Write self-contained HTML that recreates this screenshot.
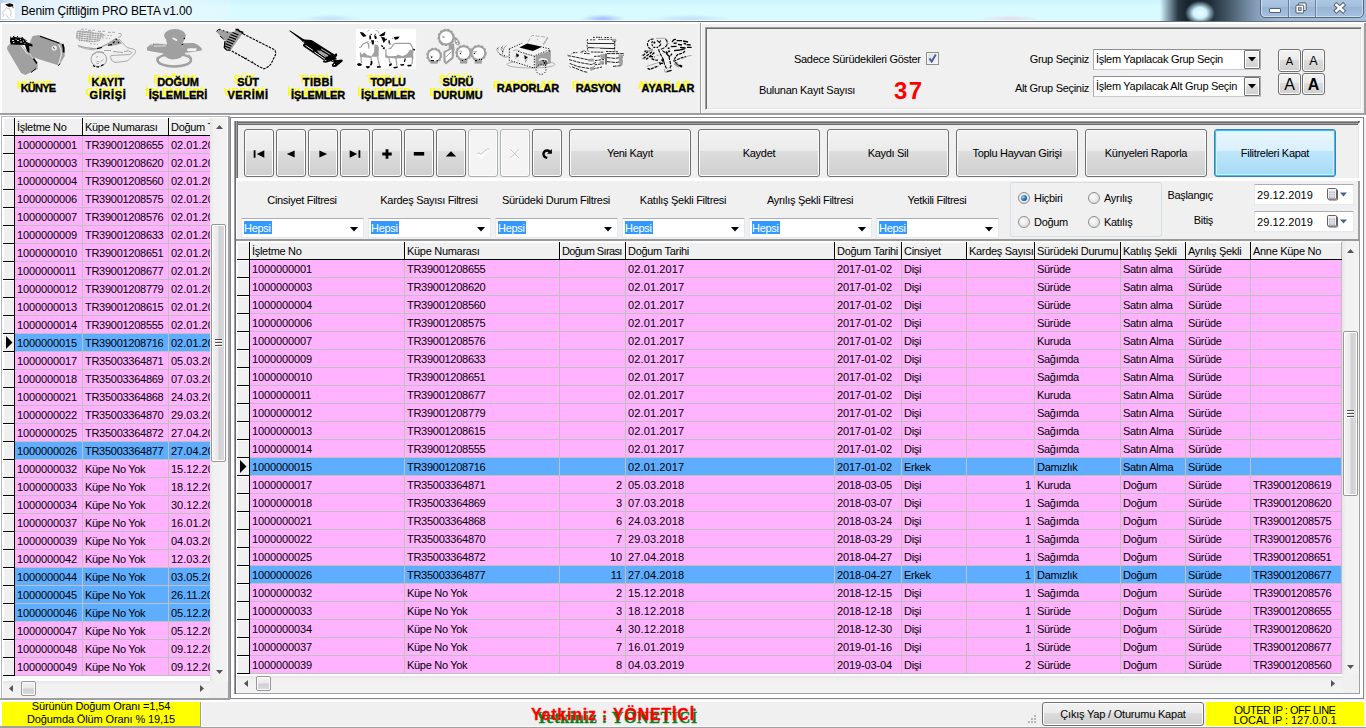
<!DOCTYPE html>
<html lang="tr"><head><meta charset="utf-8"><title>Benim Çiftliğim PRO BETA v1.00</title>
<style>
*{box-sizing:border-box;margin:0;padding:0}
html,body{width:1366px;height:728px;overflow:hidden;background:#f0f0f0}
body{position:relative;font-family:"Liberation Sans",sans-serif;font-size:11px;color:#000;letter-spacing:-0.3px;line-height:13px}
.a{position:absolute}
.n{letter-spacing:-0.12px}
.tr{letter-spacing:-0.27px}
.d{letter-spacing:0.12px}
.btn{position:absolute;border:1px solid #707070;border-radius:3px;background:linear-gradient(#f2f2f2 0%,#ebebeb 45%,#dddddd 46%,#cfcfcf 100%);box-shadow:inset 0 0 0 1px #fcfcfc;text-align:center;white-space:nowrap}
.btn.dis{border-color:#adb2b5;background:#f4f4f4}
.btn.hot{border-color:#3c7fb1;background:linear-gradient(#eaf6fd 0%,#d9f0fc 45%,#bee6fd 46%,#a7d9f5 100%);box-shadow:inset 0 0 0 1px #34c3f3, inset 0 0 0 2px #d7f0fb}
.lbl{position:absolute;white-space:nowrap}
.tl{position:absolute;text-align:center;font-weight:bold;white-space:nowrap;line-height:12.5px;text-shadow:-3.4px -3px 0 #ffff00;-webkit-text-stroke:0.35px #000}
.hdr{position:absolute;white-space:nowrap;overflow:hidden;height:17px;line-height:19px;background:#f0f0f0;box-shadow:inset 1px 1px 0 #fff}
.cell{position:absolute;white-space:nowrap;overflow:hidden;height:17px;line-height:19px}
.combo{position:absolute;background:#fff;border:1px solid #e3e9ef;border-top-color:#abadb3;border-radius:1px}
.sb{position:absolute;background:#f0f0f0}
.thumb{position:absolute;border:1px solid #979797;border-radius:2px;box-shadow:inset 0 0 0 1px #fff}
</style></head>
<body>
<div class="a" style="left:0;top:0;width:1366px;height:22px;background:radial-gradient(ellipse 15px 12px at 1200px 13px,#eefdff 0%,#cdf3ff 45%,rgba(120,180,210,0) 100%),linear-gradient(90deg,rgba(0,0,0,0) 0,rgba(0,0,0,0) 1160px,#86a0b0 1168px,#2a3843 1178px,#17232d 1188px,#1f2d38 1210px,#3f5262 1226px,#657b90 1242px,#86a0ba 1257px,#9ab5d1 1275px,#a3bedb 1366px),radial-gradient(ellipse 22px 5px at 603px 19px,rgba(150,170,255,.8) 0,rgba(150,170,255,0) 100%),radial-gradient(ellipse 40px 5px at 690px 19px,rgba(170,190,255,.45) 0,rgba(170,190,255,0) 100%),radial-gradient(ellipse 30px 5px at 330px 19px,rgba(170,190,255,.45) 0,rgba(170,190,255,0) 100%),radial-gradient(ellipse 30px 4px at 1010px 19px,rgba(255,170,200,.4) 0,rgba(255,170,200,0) 100%),linear-gradient(180deg,#cdf3fc 0%,#d8fbff 35%,#d9fbff 75%,#d2f8ff 100%)"></div>
<div class="a" style="left:0;top:0;width:230px;height:21px;background:linear-gradient(90deg,#b9cfea 0,#cfe2f5 8px,#e6f3fc 24px,#eaf7fe 150px,rgba(225,248,255,0) 260px)"></div>
<div class="a" style="left:0;top:20px;width:1160px;height:1px;background:rgba(255,255,255,.75)"></div><div class="a" style="left:0;top:21px;width:1366px;height:1px;background:#66707a"></div>
<svg class="a" style="left:1px;top:3px" width="14" height="16" viewBox="0 0 14 16"><rect width="14" height="16" fill="#fefefe"/><path d="M4 1.6 L8.6 0.3 L12.4 1.4 L12 3.2 L8 3.9 L6 3Z" fill="#0a0a0a"/><path d="M11.6 3 L12.2 5.2" stroke="#444" stroke-width=".9"/><path d="M6 4 Q4.4 5 4.6 6.6 Q2 7.6 1.6 9.6 Q1.6 11.4 2.6 12 L2 14 M4.6 11.2 Q6.4 12.4 7 14.6 L8.4 15 M8.6 6 Q10.4 8 10 11 L9.4 12.6 L10.6 13.6 M5.4 4.6 Q7 6.4 8.8 5.2" fill="none" stroke="#c4c4c4" stroke-width=".9"/></svg>
<div class="lbl" style="left:21px;top:4px;font-size:12px;line-height:15px;letter-spacing:-0.14px">Benim Çiftliğim PRO BETA v1.00</div>
<div class="a" style="left:1260px;top:-3px;width:104px;height:21px;border:1px solid #56677c;border-radius:0 0 5px 5px;background:linear-gradient(#b1cae4 0%,#a3bfdd 45%,#98b5d5 50%,#a6c1de 100%);box-shadow:inset 0 0 0 1px rgba(255,255,255,.45)"></div>
<div class="a" style="left:1288px;top:0;width:1px;height:17px;background:#6b7f97;box-shadow:1px 0 0 rgba(255,255,255,.4)"></div>
<div class="a" style="left:1315px;top:0;width:1px;height:17px;background:#6b7f97;box-shadow:1px 0 0 rgba(255,255,255,.4)"></div>
<div class="a" style="left:1269px;top:8px;width:12px;height:5px;background:#fbfbfb;border:1px solid #55606e;border-radius:1px"></div>
<svg class="a" style="left:1294px;top:1px" width="14" height="13" viewBox="0 0 14 13"><rect x="4.6" y="1.9" width="7.6" height="7.6" rx="1" fill="#f4f4f4" stroke="#505b69" stroke-width="1"/><rect x="1.9" y="4.2" width="7.8" height="7.8" rx="1" fill="#f8f8f8" stroke="#505b69" stroke-width="1"/><rect x="4.4" y="6.7" width="2.8" height="2.8" fill="#a3bfdd" stroke="#505b69" stroke-width=".8"/></svg>
<svg class="a" style="left:1333px;top:2px" width="14" height="12" viewBox="0 0 14 12"><path d="M3.4 3 L10 8.8 M10 3 L3.4 8.8" stroke="#525d6b" stroke-width="4.4" stroke-linecap="square"/><path d="M3.4 3 L10 8.8 M10 3 L3.4 8.8" stroke="#f8f8f8" stroke-width="2.6" stroke-linecap="square"/></svg>
<div class="a" style="left:0;top:22px;width:1366px;height:2px;background:#fff"></div>
<div class="a" style="left:0;top:22px;width:2px;height:706px;background:#fff"></div>
<div class="a" style="left:700px;top:23px;width:1px;height:90px;background:#a0a0a0"></div>
<div class="a" style="left:701px;top:23px;width:1px;height:90px;background:#fff"></div>
<div class="a" style="left:0;top:113px;width:1366px;height:2px;background:linear-gradient(#999,#a4a4a4)"></div>
<div class="a" style="left:0;top:115px;width:1366px;height:1px;background:#fff"></div>
<div class="a" style="left:229px;top:116px;width:1137px;height:1px;background:#fff"></div>
<div class="a" style="left:1364px;top:23px;width:2px;height:91px;background:#a0a0a0"></div>
<div class="a" style="left:705px;top:27px;width:657px;height:83px;border:1px solid;border-color:#a0a0a0 #fff #fff #a0a0a0;box-shadow:inset 1px 1px 0 #696969,inset -1px -1px 0 #e3e3e3"></div>
<div class="tl" style="left:-2px;top:82px;width:80px"><span style="letter-spacing:-0.78px">KÜNYE</span></div>
<div class="tl" style="left:68px;top:76px;width:80px"><span style="letter-spacing:0.16px">KAYIT</span><br><span style="letter-spacing:0.68px">GİRİŞİ</span></div>
<div class="tl" style="left:138px;top:76px;width:80px"><span style="letter-spacing:-0.13px">DOĞUM</span><br><span style="letter-spacing:-0.04px">İŞLEMLERİ</span></div>
<div class="tl" style="left:208px;top:76px;width:80px"><span style="letter-spacing:-0.13px">SÜT</span><br><span style="letter-spacing:0.51px">VERİMİ</span></div>
<div class="tl" style="left:278px;top:76px;width:80px"><span style="letter-spacing:0.31px">TIBBİ</span><br><span style="letter-spacing:-0.23px">İŞLEMLER</span></div>
<div class="tl" style="left:348px;top:76px;width:80px"><span style="letter-spacing:-0.38px">TOPLU</span><br><span style="letter-spacing:-0.23px">İŞLEMLER</span></div>
<div class="tl" style="left:418px;top:76px;width:80px"><span style="letter-spacing:-0.07px">SÜRÜ</span><br><span style="letter-spacing:0.1px">DURUMU</span></div>
<div class="tl" style="left:488px;top:82px;width:80px"><span style="letter-spacing:0.03px">RAPORLAR</span></div>
<div class="tl" style="left:558px;top:82px;width:80px"><span style="letter-spacing:-0.43px">RASYON</span></div>
<div class="tl" style="left:628px;top:82px;width:80px"><span style="letter-spacing:0.19px">AYARLAR</span></div>
<svg class="a" style="left:4px;top:26px" width="70" height="52" viewBox="0 0 70 52">
<path d="M3.2 20.7 L6.8 17.1 L17.9 19 L33.6 38 L33.6 43 L21.4 49 L17.1 47.1 L3.2 23.6Z" fill="#a0a0a0"/>
<path d="M28.6 10 L35 8.9 L59.3 17.9 L60.7 21.4 L60.7 30 L55 39.6 L34.3 32.9 L28.6 31.4 L24.3 25 L24.3 20Z" fill="#a0a0a0"/>
<path d="M6.2 12 L10 11 L15 11.5 L20 12.5 L22.5 16 L28.5 18.5 L28.5 20.5 L25 20 L25.5 27.5 L23 25 L21 19 L7 18.5 L6 16Z" fill="#000"/>
<path d="M8 14.5h2M11.5 13.2h1M13 14.6h2M16 13.4h1M16 16h2M19 15h1M9 16.6h1.4M20.4 17.4h1" stroke="#f2f2f2" stroke-width=".9"/><path d="M6 11.6l1-.8M9 10.6l1.4-.4M13 10.8l1-.4M17.6 11.4l1.4.4M21.4 13.6l1 1.2M24.4 21.6l.6 2.4" stroke="#000" stroke-width="1"/>
<path d="M17 19.5 L24 28.5" stroke="#f4f4f4" stroke-width="1"/>
<path d="M36 10.2 L55.5 17.2" stroke="#000" stroke-width="1.2"/>
<path d="M58.6 18 L59.6 22 L59.6 26.6" stroke="#000" stroke-width="1.8" fill="none"/>
<path d="M54.5 18 Q58 23 57.3 29 L54.5 38.5" stroke="#f6f6f6" stroke-width="1" fill="none"/>
<path d="M54.2 39.6 L56.3 37.6" stroke="#000" stroke-width="1"/>
<circle cx="50.3" cy="22" r="2.6" fill="#ececec"/><path d="M49.5 20.8 Q49 22.6 51 23" stroke="#333" stroke-width=".8" fill="none"/>
<path d="M29.5 32.5 L33 37.5" stroke="#000" stroke-width="1.6"/>
<path d="M27 46.5 L32 42.5" stroke="#000" stroke-width="1"/>
<path d="M31 31.5 L33.5 34" stroke="#f6f6f6" stroke-width="1"/>
</svg>
<svg class="a" style="left:72px;top:26px" width="70" height="52" viewBox="0 0 70 52">
<defs><pattern id="kb" width="2.6" height="2.1" patternUnits="userSpaceOnUse" patternTransform="rotate(6)"><rect width="2.1" height="1.5" fill="#a0a0a0"/></pattern></defs>
<path d="M5 5.6 L7 5 L29 6.6 L31 7.6 L33 9.4 L29.5 11.5 L27.5 15.6 L20 16.6 L8 15.4 L4.6 12.6Z" fill="url(#kb)"/>
<path d="M5 5.6 L7 5 L20 6 M4.6 12.6 L5 5.6" stroke="#a0a0a0" stroke-width=".8" fill="none"/>
<path d="M9 3.2h6M16 4.3h7M26 5.3h7M36 6.3h7" stroke="#a0a0a0" stroke-width=".9" stroke-dasharray="3 1.2"/>
<path d="M28 9 L40 9.5 M30 12 L38 12.5 M18 17.5 L26 18.5" stroke="#a0a0a0" stroke-width=".8" stroke-dasharray="2 1.5"/>
<path d="M6 19.5 Q14 22.5 24 23 Q34 20 44 12.5" stroke="#a0a0a0" stroke-width="1.3" fill="none"/>
<path d="M6.5 20.5 Q14 23.5 22 24" stroke="#a0a0a0" stroke-width=".8" fill="none"/>
<path d="M35 19.5 L45.5 12.5 L50 17.5 L42 19.5Z" fill="#a0a0a0"/>
<path d="M25 22.6 L30 21.5 M36 19.2 L40 18.6 M41 17 L42.5 15.5 M43.5 13.5 L45 13 M46 16 L47 17" stroke="#000" stroke-width="1.1"/>
<path d="M46.5 7.5 Q49.5 6.5 49.5 9 Q49 11 46 11.5" stroke="#a0a0a0" stroke-width=".9" fill="none"/>
<path d="M47 13 L55 21.5 L62.5 23.5 Q64.5 25 63 27.5 L55.5 35 L43 36.5 Q38 34.5 38.5 31 L39 29.5 L58 28.5 L60 26.5 L55.5 24.5" stroke="#a0a0a0" stroke-width=".9" fill="none"/>
<path d="M32 24.5 L39 24.5 M41 25.5 L51 26.5 M52 25.5 L56 25" stroke="#a0a0a0" stroke-width=".9"/>
<ellipse cx="26.8" cy="33.2" rx="7.8" ry="7.4" fill="none" stroke="#a0a0a0" stroke-width="1"/>
<path d="M20 29 L26 25.8 L32 26.5" stroke="#a0a0a0" stroke-width=".9" fill="none"/>
<path d="M24 31.5l2-1.3M24.5 35.5h3M28.5 35.8l3-2.3M24.5 37.5h2.5" stroke="#a0a0a0" stroke-width=".8"/>
<path d="M21 39.5 L23 40.6 M24.5 40.8 L27 40.8 M29 39.8 L31.5 38.5" stroke="#000" stroke-width="1.2"/>
</svg>
<svg class="a" style="left:142px;top:26px" width="70" height="52" viewBox="0 0 70 52">
<ellipse cx="32.9" cy="9.6" rx="10.9" ry="6.6" fill="#a0a0a0"/>
<path d="M23.5 11 Q25 17 25 19 L25 27 L40.5 27 L40.5 18.5 Q42 14 43 11Z" fill="#a0a0a0"/>
<path d="M5 21.5 Q8 18.2 12 17.3 L25 18.5 L25 24 L22 27.5 L10 25.5 L5 24.5Z" fill="#a0a0a0"/>
<path d="M40.5 17.2 L52 17 Q57 18.5 59.8 22.5 L59.5 24.5 L45 26.8 L40.5 26Z" fill="#a0a0a0"/>
<path d="M20 25 Q22 32.5 30 33.5 Q40 33.5 44 26 L44 22 L21 22Z" fill="#a0a0a0"/>
<ellipse cx="32.3" cy="34.2" rx="16.7" ry="6.3" fill="none" stroke="#a0a0a0" stroke-width="2.4"/>
<path d="M16 31 Q14.5 34.5 17.5 37" stroke="#a0a0a0" stroke-width="2.2" fill="none"/>
<path d="M42.5 40 Q48.5 37 49.5 33 Q49.5 30 46 28.5" stroke="#a0a0a0" stroke-width="1" fill="none"/>
<path d="M45 24.3 Q44.8 22.4 47 22.3 L53.5 22.2 Q55.5 22.3 54.5 23.8 L53.5 25 L46 25.2Z" fill="#f4f4f4"/>
<path d="M9.5 19.5 L11.5 17.8 L13.5 17.6 M19.5 17.5 L23.5 17.6" stroke="#ececec" stroke-width="1"/>
<path d="M12 20.2 L24 19.8" stroke="#e4e4e4" stroke-width="1"/>
<path d="M31.2 12.3 L34.5 14.2" stroke="#f6f6f6" stroke-width="1.7" stroke-linecap="round"/>
<circle cx="42.4" cy="12.5" r=".8" fill="#000"/><circle cx="40.4" cy="18.5" r=".8" fill="#000"/>
</svg>
<svg class="a" style="left:210px;top:26px" width="70" height="52" viewBox="0 0 70 52">
<path d="M6.2 5.5 L9.5 3.2 L20.5 6 L25 5.5 L17 15.5 L13.5 13.5Z" fill="#a0a0a0"/>
<path d="M6.5 5.2 L8.5 3.5 L10.5 3.3 M13 4.5 l1.2 .5 M16.5 6 l1.5 .4 M10 10 L13.5 13.2" stroke="#000" stroke-width="1" fill="none"/>
<path d="M26.5 3.5 L32.5 7.5 L20.5 24.5 L14.5 22 L14.5 18Z" fill="#a0a0a0"/>
<path d="M22.5 6.5 L28.5 9 M20.5 8.5 L27.5 11.2 M19 10.8 L26 13.4 M17.5 13 L24.6 15.7 M16.5 15.3 L23.2 18 M15.5 17.6 L21.6 20.2 M14.8 20 L20.6 22.4" stroke="#000" stroke-width="1.2"/>
<path d="M25.5 3.6 L28 3.6 L29.5 5.2 L32.5 6.3 L32.2 7.8" stroke="#000" stroke-width="1.6" fill="none"/>
<path d="M15 15 L14.3 21.5 L16.5 24 L20.5 24.4" stroke="#000" stroke-width="1.3" fill="none"/>
<path d="M33 7.8 L64 23.5 Q66 25 65.6 28.5 L61 38 Q58 41.5 54 42.8 L50 41 L21 24.5" stroke="#000" stroke-width="1.1" fill="none" stroke-dasharray="2.6 1"/>
<path d="M33 31 l2.2 1.7 l1.8 -.6 M42 35.5 l1.5 1.2" stroke="#000" stroke-width=".9" fill="none"/>
</svg>
<svg class="a" style="left:280px;top:26px" width="70" height="52" viewBox="0 0 70 52">
<path d="M9 4.8 L10.2 4.6 L24 13.4 L23 15.4Z" fill="#000"/>
<path d="M21 12.8 L25 13.4 L31.5 14 L34 15.4 L54.5 28.4 L46 35.8 L23.5 20.5 L22.8 19 L24.4 17.2 L21.8 15Z" fill="#000"/>
<path d="M45 35 L56.5 27 L57.3 29.8 L55.5 31.5 L57 33 L46 36.8 L43 36.2 L43.2 34.4Z" fill="#000"/>
<path d="M52.5 33.2 L57.5 34 L62 33.5 L63 35 L56 40.8 L52.5 41 L51.8 38.5 L54 36.4 L50.4 35Z" fill="#000"/>
<path d="M25.5 19.4 L33 24.4 M34.5 26 L45 33.2" stroke="#f0f0f0" stroke-width="1"/>
<path d="M37.5 24.6 L47 30.2 M39.5 25 L48 30" stroke="#a8a8a8" stroke-width="1.5"/>
<path d="M38.5 26.4 L46 31.2" stroke="#d8d8d8" stroke-width="1"/>
<path d="M41 22.8 L50.5 28.6" stroke="#f0f0f0" stroke-width=".8"/>
<path d="M44.8 34.8 l1.6 -.6 M52.2 34.6 l1.2 .3 M53.6 38.8 l1.4 -.5" stroke="#ddd" stroke-width="1"/>
<circle cx="23.8" cy="16" r=".8" fill="#999"/>
</svg>
<svg class="a" style="left:350px;top:26px" width="70" height="52" viewBox="0 0 70 52">
<rect x="5.9" y="3" width="60.2" height="40" fill="#fff"/>
<g fill="#000">
<path d="M9.8 6 L13 6.5 L16.5 10 L13.5 11 L11.5 9Z"/><path d="M29 9.5 L35.5 5.5 L34.5 9.5 L31 10.5Z"/>
<path d="M19.3 9.5l1.6 0 .3 3.8-1.8.3z"/><path d="M24 9.3l2 .4 1 2.6-2 .9z"/><path d="M19.6 8l2-.2.4 1.2M24 8l1.7-.3.5 1.2"/>
<path d="M21 14.2 L24 14.2 L23.8 18.6 L22.2 18.6Z"/>
<path d="M31 11 L34.5 11.2 L35.6 14.4 L33.6 17 L32.5 14Z"/><path d="M35 13 l1.6 -.4 .3 1.4 -1.6 .3z"/>
<path d="M38.4 14.2 l1.4 .2 .2 3.4 -1.4 -.4z"/>
<path d="M31.4 19 l2 1 -.6 1.2 -1.8-1z M33.4 21.2 l1.8 .4 -1 1.8 -1.6 -1z"/>
<path d="M43.6 11 L49.6 10.4 L48 13 L45 13.8Z"/>
<circle cx="27.5" cy="21.4" r=".8"/>
<path d="M62 22.6 l2.8 .4 .2 1.6 -2.8 -.4z"/>
<path d="M7 38 L9 37 L11.8 38 L11.4 39.8 L8 40Z"/><path d="M15.6 40.2 L19.8 40 L19.4 42 L17 42.6Z"/><path d="M20.6 35 l1.6 0 .4 2 -1.2 2.6 -1.6 -.4 .8 -2z"/><path d="M26.8 40.2 L30.8 40 L30.6 41.8 L27 41.8Z"/>
<path d="M39 38.4 l1.4 -1.4 1.6 .4 -.4 1.8 -2.2 1.2z"/><path d="M43.2 41 L47.8 40.4 L47.6 42 L44 42.6Z"/><path d="M50 38.2 L54.2 38 L54 39.6 L51 39.8Z"/><path d="M57 39 L61.6 38.6 L61.4 40.2 L58 40.6Z"/>
<path d="M54.6 32.4 l1.2 .2 -.8 3.4 -1.2 -.2z"/>
</g>
<g fill="none" stroke="#a0a0a0" stroke-width="1.25">
<path d="M9.2 21.4 L11 21 L13 18 L17 16.2 L18.6 18.5"/>
<path d="M10.4 26.5 L10.6 31 M11 31 L11.4 37"/>
<path d="M21 31.5 L21.4 35"/>
<path d="M27.6 31 L28.6 36 L29.6 40"/>
<path d="M18.4 17 L19 22.6"/>
<path d="M36 23.5 L35.8 31 L39 31.4 L39.4 35 L41 37.6"/>
<path d="M38.4 22.4 L41 22.2 L43.4 18.2 L46 17.4 L60 17.4 L62.6 21.6 L62.8 27"/>
<path d="M43 13 L42.4 11.8 M41 17.6 L39 18.6"/>
<path d="M46 32 L46.8 39.8"/>
<path d="M62.6 31 L62 38"/>
<path d="M17.5 5.5l1.8-1.6M25.5 4.2l2.6 1.2.8 2.2" stroke-width=".8"/>
</g>
<g fill="#a0a0a0">
<path d="M24.4 18.5 L27.6 19 L28.8 22 L28.6 30.8 L21 30.8 L24.2 26Z"/>
<path d="M10.2 26.4 L12 28.4 L14.4 26.6 L17.4 29.2 L21.5 30 L21.5 32 L10.4 31Z"/>
<path d="M36.2 28.5 L38.6 30.2 L46 30 L48 28.4 L52.6 30.2 L57 28 L59.4 24.4 L60 23.6 L63 25 L63.4 33 L61 31.6 L46.6 32.4 L36.2 31.6Z"/>
</g>
<g fill="#a0a0a0"><rect x="17.5" y="15" width="1" height="1"/><rect x="19.5" y="16.2" width="1" height="1"/><rect x="25.3" y="15" width=".8" height=".8"/><rect x="27" y="15.2" width=".8" height=".8"/></g>
</svg>
<svg class="a" style="left:420px;top:26px" width="70" height="52" viewBox="0 0 70 52">
<path d="M34 10 L37.5 12.5 L40.5 17.5 L38 19.5 L35.5 18 L34.5 15Z" fill="#a0a0a0"/>
<circle cx="36.6" cy="15" r=".9" fill="#f4f4f4"/><circle cx="37.6" cy="17.4" r=".8" fill="#f4f4f4"/>
<path d="M29 17.5 L34 17.5 L34.5 24 L33.5 32.5 L26 38.5 L23.6 36 L23.4 25.5 L28.6 23Z" fill="#a0a0a0"/>
<path d="M25.4 26.5 L31.6 23.4 L31.8 31 L25.8 36Z" fill="#fff"/>
<path d="M26 31 L31.5 25.6" stroke="#a0a0a0" stroke-width="1"/>
<circle cx="26.2" cy="11.4" r="7.2" fill="#fff" stroke="#a0a0a0" stroke-width="2"/><circle cx="26.2" cy="11.4" r="7.9" fill="none" stroke="#a0a0a0" stroke-width="1.6" stroke-dasharray="2.2 1.6"/>
<path d="M22.4 9.6 L25.2 11 L22.6 12.6Z" fill="#a0a0a0"/>
<path d="M20 16 l1.4 2 2 1" stroke="#a0a0a0" stroke-width="1.4" fill="none"/>
<circle cx="14.2" cy="29.6" r="6.5" fill="#fff" stroke="#a0a0a0" stroke-width="1.9"/><circle cx="14.2" cy="29.6" r="7.2" fill="none" stroke="#a0a0a0" stroke-width="1.6" stroke-dasharray="2.2 1.6"/>
<rect x="10.4" y="35.2" width="7.4" height="2.4" fill="#a0a0a0"/>
<path d="M10.6 29.6 l1 1.6 1.4-1.6" stroke="#a0a0a0" stroke-width=".8" fill="none"/><circle cx="11.6" cy="31.2" r=".7" fill="#000"/>
<path d="M10.8 34.6h3.2M16.6 34.6h1.4" stroke="#000" stroke-width="1"/>
<circle cx="43.6" cy="27" r="6.8" fill="#fff" stroke="#a0a0a0" stroke-width="1.9"/><circle cx="43.6" cy="27" r="7.5" fill="none" stroke="#a0a0a0" stroke-width="1.6" stroke-dasharray="2.2 1.6"/>
<rect x="40" y="33.4" width="7.2" height="4.2" fill="#a0a0a0"/>
<path d="M38.6 25.2h3.4l-1.4 2" stroke="#a0a0a0" stroke-width=".8" fill="none"/><circle cx="40.4" cy="27.6" r=".7" fill="#000"/>
<circle cx="42.4" cy="34.4" r=".7" fill="#000"/><circle cx="45.6" cy="33.4" r=".7" fill="#000"/>
<circle cx="58.4" cy="27" r="6.8" fill="#fff" stroke="#a0a0a0" stroke-width="1.9"/><circle cx="58.4" cy="27" r="7.5" fill="none" stroke="#a0a0a0" stroke-width="1.6" stroke-dasharray="2.2 1.6"/>
<rect x="54.6" y="33.4" width="7.2" height="4.2" fill="#a0a0a0"/>
<path d="M53 25.4h3.6l-1.6 2" stroke="#a0a0a0" stroke-width=".8" fill="none"/><circle cx="54.4" cy="27.4" r=".7" fill="#000"/>
<path d="M55 34.6h2M59 33.4h1M61 33.4h1" stroke="#000" stroke-width="1"/>
</svg>
<svg class="a" style="left:490px;top:26px" width="70" height="52" viewBox="0 0 70 52">
<ellipse cx="41" cy="38.4" rx="24" ry="3.6" fill="none" stroke="#a0a0a0" stroke-width=".8"/>
<path d="M19.3 22.9 L32.2 17.2 L59.3 22.9 L59.8 24 L44.3 30 Z" fill="#f4f4f4"/>
<path d="M19.3 22.9 L44.3 30 L44.3 42.2 L19.3 34.3Z" fill="#f0f0f0"/>
<path d="M45.6 30 L60.8 24.2 L60.8 37.2 L45.6 41.4Z" fill="#a0a0a0"/>
<path d="M29.3 21.4 L37.2 17.5 L52.2 20.7 L42.9 25Z" fill="#000"/>
<path d="M19.3 22.9 L32.2 17.2 M52.8 21.2 L59.3 22.9 L59.6 26 M19.3 22.9 L19.3 34.3 L44.3 42.2 L44.3 30 L59.3 23.6 M28 25.4 L44.3 30" stroke="#000" stroke-width=".95" fill="none" stroke-dasharray="1.2 1.5"/>
<path d="M38 15.8 L42 9.4 L57.8 11.4 L53 19.4" stroke="#a0a0a0" stroke-width=".8" fill="none" stroke-dasharray="4 1.6"/>
<path d="M53.5 18 L57.8 12" stroke="#a0a0a0" stroke-width="1.6" stroke-dasharray="1 1"/>
<circle cx="47.4" cy="13.4" r=".5" fill="#a0a0a0"/>
<path d="M23 24.5 Q28 23 30 25 M26 28.6 l3 0 M33.5 27 l8 2.6" stroke="#a0a0a0" stroke-width=".8" fill="none"/>
<path d="M26.4 27.5 L29 29.6 L26.8 31.2Z M34.6 29.4 L37.6 31.4 L35 33.2Z M35 35.5 l2 -1.6" fill="#000" stroke="#000" stroke-width=".5"/>
<path d="M25 29.5 l.8 3.6 M28 33.5 l1.2 2.5 M37 32 l-1.6 5" stroke="#a0a0a0" stroke-width=".8" stroke-dasharray="1.4 1"/>
<path d="M16.5 19.4 L14 22 L12 29 L15 31.4 L19 30 M9 20.6 L6.4 23.6 L9 27.4 L13.6 31 M13 19.6 l-2 3.4 2 3" stroke="#a0a0a0" stroke-width="1" fill="none"/>
<path d="M7.5 22.6 l.8 .6 M11.6 21.6 l.8 .6 M12 25 l.8 .6 M9.6 28 l1 .8 M14 29.4 l1 .6" stroke="#000" stroke-width="1"/>
<path d="M49 34.6 Q50.6 32 54 33.2 Q57.4 33 57.4 36 Q57 38 55.4 38.2" stroke="#eee" stroke-width="1.6" fill="none"/>
<circle cx="51" cy="43.4" r="5" fill="none" stroke="#000" stroke-width=".9" stroke-dasharray="1.2 1.6"/>
<path d="M52.5 34.6 L56.6 35.2 L57 38 L55 39.4" stroke="#000" stroke-width="1.2" fill="none" stroke-dasharray="1.6 1"/>
<circle cx="54.6" cy="37" r="1" fill="#000"/>
<path d="M57.4 24 l1.6 -.6 M55.6 25.4 l1.2 -.5" stroke="#ddd" stroke-width="1"/>
</svg>
<svg class="a" style="left:560px;top:26px" width="70" height="52" viewBox="0 0 70 52">
<path d="M27.4 13.5 Q27.4 12 30 11.8 L53 11.6 Q56 12 56.4 14.4 L54.8 16.4 L54.8 24.6 L28.4 24.8 Q26.8 22 27.2 19Z" fill="#f6f6f6"/>
<path d="M33 11.4h2M36 11.3h6M44.6 11.5h4M50.5 11.6h1.2" stroke="#000" stroke-width=".9" stroke-dasharray="1.6 .8"/>
<path d="M30 13.8h6M38.4 13.4h11.4M50.5 13.4h2" stroke="#333" stroke-width=".9" stroke-dasharray="2.2 .7"/>
<path d="M27.6 13.2 Q26.8 15 27.6 17.2 Q26.6 19.6 27.6 22 Q27 24 28.8 25.6" stroke="#000" stroke-width=".85" fill="none" stroke-dasharray="2 .8"/>
<path d="M28 17.4 L54.4 17.6 M28 21.6 L34.6 21.8 M40 22.2 L54.6 22.6" stroke="#000" stroke-width=".85"/>
<path d="M35 21.8h5" stroke="#a0a0a0" stroke-width="1.4"/>
<path d="M52 13.4 L55.6 12.6 L56.6 14.6 L54.6 16.6 L52.4 16Z" fill="#a0a0a0"/>
<path d="M54.8 15 L54.6 24.4" stroke="#000" stroke-width=".85" stroke-dasharray="2.4 .6"/>
<path d="M7.2 28.4 L21 25.4 L45.4 27.4 L45.6 40.4 L32 46.4 L25 46.6 L9.4 40.4Z" fill="#f6f6f6"/>
<path d="M45.6 26.6 L63.4 26.8 L63.6 39.6 L54 40.8 L45.6 38.6Z" fill="#f6f6f6"/>
<path d="M13 26.6h4.4M21.4 25.6 L24.6 24.8 L27 26.8 M24 27.4 L30 27.8 M31 26 L44 26.2 M46 25.4 L58 25.8" stroke="#000" stroke-width=".85" stroke-dasharray="2.4 .8" fill="none"/>
<path d="M8 29.6 L17 31.4 L32 34.6 L33 33.2 M9 33.6 L20 36.6 L31.6 38.6 L36 36.4 M9.6 37.4 L18 40.6 L30 42.6 L34.6 40.4 M12 40.8 L24 45.6 L28 46.4" stroke="#000" stroke-width=".85" fill="none" stroke-dasharray="3.4 .8"/>
<path d="M34 30.4 L42 30 M35 34.6 L44 33.4 M34.6 38.8 L44 37.6 M33 43 L42 41" stroke="#000" stroke-width=".85" stroke-dasharray="2.6 .9"/>
<path d="M46 27.4 L46 38.4" stroke="#000" stroke-width="1.1"/>
<path d="M47 27.6 L63.4 27.6 L63.4 29.6 M47 31.6 L55 32.4 L63 31 M47 35.6 L56 36.6 L63 35.2 M53 40.4 L62 39.6" stroke="#000" stroke-width=".85" fill="none" stroke-dasharray="3.6 .8"/>
<path d="M7.2 28.2 L7.4 30 L9 31.4 L8.4 28.6Z M27.4 33 L33.4 32.6 L34 35.6 L28.6 35.6Z M40 28.6 L45 28 L45.4 32.6 L41 33.6Z M39.6 35.4 L44 34.6 L44 37.6 L40 38Z M30 41.4 L34 40.8 L34 43.8 L30.4 45Z M58.6 28.6 L62.6 28.4 L62.8 39 L59.4 39.4 L58.8 34Z" fill="#a0a0a0"/>
<path d="M20 26.2 L22.6 26.8" stroke="#a0a0a0" stroke-width="1.6"/>
<path d="M8.8 39.6 L11 42 M11 28.2 l2.6 -.8" stroke="#a0a0a0" stroke-width=".9"/>
</svg>
<svg class="a" style="left:630px;top:26px" width="70" height="52" viewBox="0 0 70 52">
<g fill="none" stroke="#000" stroke-width="1.1">
<path d="M23.6 13 Q18.6 12.6 17.4 17.6 Q17.6 22.6 22.4 23.4" stroke-dasharray="3 1"/>
<path d="M22.4 15 Q21 19.6 24 21.4 L28 21.4" stroke-dasharray="2 1.2"/>
<path d="M35.6 13 Q38.4 16 36.6 19.6 Q33.6 23 29.6 23.6" stroke-dasharray="4 1"/>
<path d="M27 14.4 L29.6 16.6 L30.6 14.6 M31 17.6 Q30.6 19.6 28.6 20.4" />
<path d="M28.4 23.4 L30 27.4 L33.4 33.4 L34.4 38 L36 41.6 L38 43 M32.4 24.6 L36 27 L39 31 L40 35.4 L41 40 L39.4 43" stroke-dasharray="3.4 1"/>
<path d="M14.4 25.6 L16.4 24.6 M12.6 29.6 L19.6 24.6 M13.4 32.6 L22 25.6 M16 33.6 L24.4 26.6 M20 30.6 L24.6 30.8 M21.6 32.6 L24.6 34 L28 34" stroke-width="1.3" stroke-dasharray="3 1"/>
<path d="M17.6 42.4 L19.6 43.4 L28.4 40 M29.6 36 L30.6 39.4 M30 37.4 L33.6 37.4" stroke-width="1.3" stroke-dasharray="3 .8"/>
<path d="M42 16 L44 13.6 L46 13.4 M46.6 14.6 L52 14.6 M53 15 L58 16 M43.6 17.4 L46.6 17 M48 18.4 L52 19 M53.6 17.4 L56 18 M56.6 18.6 L60.6 19 M57 21.4 L61.6 21.4 M41 20.6 L46.6 20.4 M50 21.4 L55.6 22 M44 24.6 L50 24 L55 22.6" stroke-width="1.3"/>
<path d="M55 25 L53 27 L47.6 28.6 L45.6 31 L43.6 34.6 M40.6 29.6 L42 27.6 M38 29 L40 31" stroke-width="1.2" stroke-dasharray="3 .8"/>
<path d="M43.6 35.6 L47.6 33.6 L52 31.6 L56 30.6" stroke-dasharray="3 .9"/>
<path d="M44.6 38 L48 39 L51.6 40.4 M45 36.6 L47.4 37.4" stroke-width="1.3"/>
<path d="M38.6 21.4 L38.6 23 M38.6 24.6 L39.6 26" stroke-width="1.8"/>
<path d="M36 25.6 L37.6 27.6 M31.6 33.4 L33.6 35.6" stroke-width="1.8"/>
<path d="M36.6 45.6 L41.6 44.4" />
</g>
<g fill="none" stroke="#a0a0a0" stroke-width=".9">
<path d="M26 12.4 L35 12.2 L37.4 14"/><path d="M38 17.6 L39.4 17"/>
<path d="M11.4 29.4 L14 28 M11.4 32 L14.6 33.6 M15.6 24.4 L23.6 24.6"/>
<path d="M16.6 40.4 L29 36.4"/><path d="M34.6 43 L34.8 46 L38 46.4"/>
<path d="M52.6 32.6 L58 30 L61.6 29.4"/><path d="M40 20.6 L42 19.6 M50 24.6 L52.6 24.6"/>
<path d="M24.6 33.4 L28 33.6 M26.6 29.4 L28.6 29.2"/>
<path d="M44.6 37.4 L46.6 39.6 L49 41" stroke-width="1.6"/>
<path d="M33.6 27 L32.4 27.4" />
</g>
<path d="M49.8 38.4 L52.4 39.4 L52 41.4 L49.6 41Z" fill="#000"/>
<circle cx="24.4" cy="16.6" r="1.1" fill="#000"/>
</svg>
<div class="lbl" style="left:794px;top:53px">Sadece Sürüdekileri Göster</div>
<div class="a" style="left:926px;top:52px;width:13px;height:13px;border:1px solid #8e8f8f;background:linear-gradient(135deg,#dcdfe3,#f6f6f6);box-shadow:inset 0 0 0 1px #f4f4f4"></div>
<svg class="a" style="left:928px;top:54px" width="9" height="9" viewBox="0 0 9 9"><path d="M1.4 4.4 L3.7 7.6 L7.8 0.5" fill="none" stroke="#4b6097" stroke-width="1.9"/></svg>
<div class="lbl" style="left:759px;top:84px">Bulunan Kayıt Sayısı</div>
<div class="lbl" style="left:894px;top:77px;font-size:24px;line-height:28px;font-weight:bold;color:#ff0000;letter-spacing:1.3px">37</div>
<div class="lbl" style="left:989px;top:53px;width:100px;text-align:right">Grup Seçiniz</div>
<div class="lbl" style="left:989px;top:82px;width:100px;text-align:right">Alt Grup Seçiniz</div>
<div class="a" style="left:1093px;top:49px;width:168px;height:21px;background:#fff;border:1px solid #abadb3;border-top-color:#8e9096;border-bottom-color:#c9cbd1"></div>
<div class="lbl" style="left:1096px;top:53px">İşlem Yapılacak Grup Seçin</div>
<div class="btn" style="left:1244px;top:50px;width:16px;height:19px;border-radius:1px"></div>
<svg class="a" style="left:1248px;top:57px" width="8" height="5" viewBox="0 0 8 5"><path d="M0 0 H8 L4 4.5Z" fill="#000"/></svg>
<div class="a" style="left:1093px;top:76px;width:168px;height:21px;background:#fff;border:1px solid #abadb3;border-top-color:#8e9096;border-bottom-color:#c9cbd1"></div>
<div class="lbl" style="left:1096px;top:80px">İşlem Yapılacak Alt Grup Seçin</div>
<div class="btn" style="left:1244px;top:77px;width:16px;height:19px;border-radius:1px"></div>
<svg class="a" style="left:1248px;top:84px" width="8" height="5" viewBox="0 0 8 5"><path d="M0 0 H8 L4 4.5Z" fill="#000"/></svg>
<div class="btn" style="left:1278px;top:49px;width:23px;height:23px;font-size:11px;line-height:23px;font-weight:normal;letter-spacing:0">A</div>
<div class="btn" style="left:1302px;top:49px;width:23px;height:23px;font-size:12.5px;line-height:23px;font-weight:normal;letter-spacing:0">A</div>
<div class="btn" style="left:1278px;top:73px;width:23px;height:22px;font-size:16px;line-height:22px;font-weight:normal;letter-spacing:0">A</div>
<div class="btn" style="left:1302px;top:73px;width:23px;height:22px;font-size:16px;line-height:22px;font-weight:bold;letter-spacing:0">A</div>
<div class="a" style="left:1px;top:116px;width:229px;height:584px;background:#fff;border:1px solid #a0a0a0;border-right-width:2px;border-top-color:#b4b8c0;border-left-color:#b4b8c0"></div>
<div class="a" style="left:3px;top:118px;width:207px;height:558px;overflow:hidden;background:#fff">
<div class="hdr" style="left:0;top:0;width:11px"></div><div class="a" style="left:11px;top:0;width:1px;height:17px;background:#000"></div>
<div class="hdr" style="left:12px;top:0;width:67px;padding-left:2px">İşletme No</div><div class="a" style="left:79px;top:0;width:1px;height:17px;background:#000"></div>
<div class="hdr" style="left:80px;top:0;width:85px;padding-left:2px">Küpe Numarası</div><div class="a" style="left:165px;top:0;width:1px;height:17px;background:#000"></div>
<div class="hdr" style="left:166px;top:0;width:60px;padding-left:2px">Doğum Tarihi</div><div class="a" style="left:226px;top:0;width:1px;height:17px;background:#000"></div>
<div class="a" style="left:0;top:17px;width:207px;height:1px;background:#000"></div>
<div class="a" style="left:0;top:18px;width:11px;height:17px;background:#f0f0f0;box-shadow:inset 1px 1px 0 #fff"></div>
<div class="a" style="left:0;top:35px;width:12px;height:1px;background:#000"></div><div class="a" style="left:11px;top:18px;width:1px;height:18px;background:#000"></div>
<div class="a" style="left:12px;top:18px;width:195px;height:18px;background:#ffb3ff;border-bottom:1px solid #c0c0c0"></div>
<div class="cell n" style="left:14px;top:18px;width:66px">1000000001</div>
<div class="cell tr" style="left:82px;top:18px;width:84px">TR39001208655</div>
<div class="cell" style="left:168px;top:18px;width:60px;letter-spacing:0">02.01.2017</div>
<div class="a" style="left:0;top:36px;width:11px;height:17px;background:#f0f0f0;box-shadow:inset 1px 1px 0 #fff"></div>
<div class="a" style="left:0;top:53px;width:12px;height:1px;background:#000"></div><div class="a" style="left:11px;top:36px;width:1px;height:18px;background:#000"></div>
<div class="a" style="left:12px;top:36px;width:195px;height:18px;background:#ffb3ff;border-bottom:1px solid #c0c0c0"></div>
<div class="cell n" style="left:14px;top:36px;width:66px">1000000003</div>
<div class="cell tr" style="left:82px;top:36px;width:84px">TR39001208620</div>
<div class="cell" style="left:168px;top:36px;width:60px;letter-spacing:0">02.01.2017</div>
<div class="a" style="left:0;top:54px;width:11px;height:17px;background:#f0f0f0;box-shadow:inset 1px 1px 0 #fff"></div>
<div class="a" style="left:0;top:71px;width:12px;height:1px;background:#000"></div><div class="a" style="left:11px;top:54px;width:1px;height:18px;background:#000"></div>
<div class="a" style="left:12px;top:54px;width:195px;height:18px;background:#ffb3ff;border-bottom:1px solid #c0c0c0"></div>
<div class="cell n" style="left:14px;top:54px;width:66px">1000000004</div>
<div class="cell tr" style="left:82px;top:54px;width:84px">TR39001208560</div>
<div class="cell" style="left:168px;top:54px;width:60px;letter-spacing:0">02.01.2017</div>
<div class="a" style="left:0;top:72px;width:11px;height:17px;background:#f0f0f0;box-shadow:inset 1px 1px 0 #fff"></div>
<div class="a" style="left:0;top:89px;width:12px;height:1px;background:#000"></div><div class="a" style="left:11px;top:72px;width:1px;height:18px;background:#000"></div>
<div class="a" style="left:12px;top:72px;width:195px;height:18px;background:#ffb3ff;border-bottom:1px solid #c0c0c0"></div>
<div class="cell n" style="left:14px;top:72px;width:66px">1000000006</div>
<div class="cell tr" style="left:82px;top:72px;width:84px">TR39001208575</div>
<div class="cell" style="left:168px;top:72px;width:60px;letter-spacing:0">02.01.2017</div>
<div class="a" style="left:0;top:90px;width:11px;height:17px;background:#f0f0f0;box-shadow:inset 1px 1px 0 #fff"></div>
<div class="a" style="left:0;top:107px;width:12px;height:1px;background:#000"></div><div class="a" style="left:11px;top:90px;width:1px;height:18px;background:#000"></div>
<div class="a" style="left:12px;top:90px;width:195px;height:18px;background:#ffb3ff;border-bottom:1px solid #c0c0c0"></div>
<div class="cell n" style="left:14px;top:90px;width:66px">1000000007</div>
<div class="cell tr" style="left:82px;top:90px;width:84px">TR39001208576</div>
<div class="cell" style="left:168px;top:90px;width:60px;letter-spacing:0">02.01.2017</div>
<div class="a" style="left:0;top:108px;width:11px;height:17px;background:#f0f0f0;box-shadow:inset 1px 1px 0 #fff"></div>
<div class="a" style="left:0;top:125px;width:12px;height:1px;background:#000"></div><div class="a" style="left:11px;top:108px;width:1px;height:18px;background:#000"></div>
<div class="a" style="left:12px;top:108px;width:195px;height:18px;background:#ffb3ff;border-bottom:1px solid #c0c0c0"></div>
<div class="cell n" style="left:14px;top:108px;width:66px">1000000009</div>
<div class="cell tr" style="left:82px;top:108px;width:84px">TR39001208633</div>
<div class="cell" style="left:168px;top:108px;width:60px;letter-spacing:0">02.01.2017</div>
<div class="a" style="left:0;top:126px;width:11px;height:17px;background:#f0f0f0;box-shadow:inset 1px 1px 0 #fff"></div>
<div class="a" style="left:0;top:143px;width:12px;height:1px;background:#000"></div><div class="a" style="left:11px;top:126px;width:1px;height:18px;background:#000"></div>
<div class="a" style="left:12px;top:126px;width:195px;height:18px;background:#ffb3ff;border-bottom:1px solid #c0c0c0"></div>
<div class="cell n" style="left:14px;top:126px;width:66px">1000000010</div>
<div class="cell tr" style="left:82px;top:126px;width:84px">TR39001208651</div>
<div class="cell" style="left:168px;top:126px;width:60px;letter-spacing:0">02.01.2017</div>
<div class="a" style="left:0;top:144px;width:11px;height:17px;background:#f0f0f0;box-shadow:inset 1px 1px 0 #fff"></div>
<div class="a" style="left:0;top:161px;width:12px;height:1px;background:#000"></div><div class="a" style="left:11px;top:144px;width:1px;height:18px;background:#000"></div>
<div class="a" style="left:12px;top:144px;width:195px;height:18px;background:#ffb3ff;border-bottom:1px solid #c0c0c0"></div>
<div class="cell n" style="left:14px;top:144px;width:66px">1000000011</div>
<div class="cell tr" style="left:82px;top:144px;width:84px">TR39001208677</div>
<div class="cell" style="left:168px;top:144px;width:60px;letter-spacing:0">02.01.2017</div>
<div class="a" style="left:0;top:162px;width:11px;height:17px;background:#f0f0f0;box-shadow:inset 1px 1px 0 #fff"></div>
<div class="a" style="left:0;top:179px;width:12px;height:1px;background:#000"></div><div class="a" style="left:11px;top:162px;width:1px;height:18px;background:#000"></div>
<div class="a" style="left:12px;top:162px;width:195px;height:18px;background:#ffb3ff;border-bottom:1px solid #c0c0c0"></div>
<div class="cell n" style="left:14px;top:162px;width:66px">1000000012</div>
<div class="cell tr" style="left:82px;top:162px;width:84px">TR39001208779</div>
<div class="cell" style="left:168px;top:162px;width:60px;letter-spacing:0">02.01.2017</div>
<div class="a" style="left:0;top:180px;width:11px;height:17px;background:#f0f0f0;box-shadow:inset 1px 1px 0 #fff"></div>
<div class="a" style="left:0;top:197px;width:12px;height:1px;background:#000"></div><div class="a" style="left:11px;top:180px;width:1px;height:18px;background:#000"></div>
<div class="a" style="left:12px;top:180px;width:195px;height:18px;background:#ffb3ff;border-bottom:1px solid #c0c0c0"></div>
<div class="cell n" style="left:14px;top:180px;width:66px">1000000013</div>
<div class="cell tr" style="left:82px;top:180px;width:84px">TR39001208615</div>
<div class="cell" style="left:168px;top:180px;width:60px;letter-spacing:0">02.01.2017</div>
<div class="a" style="left:0;top:198px;width:11px;height:17px;background:#f0f0f0;box-shadow:inset 1px 1px 0 #fff"></div>
<div class="a" style="left:0;top:215px;width:12px;height:1px;background:#000"></div><div class="a" style="left:11px;top:198px;width:1px;height:18px;background:#000"></div>
<div class="a" style="left:12px;top:198px;width:195px;height:18px;background:#ffb3ff;border-bottom:1px solid #c0c0c0"></div>
<div class="cell n" style="left:14px;top:198px;width:66px">1000000014</div>
<div class="cell tr" style="left:82px;top:198px;width:84px">TR39001208555</div>
<div class="cell" style="left:168px;top:198px;width:60px;letter-spacing:0">02.01.2017</div>
<div class="a" style="left:0;top:216px;width:11px;height:17px;background:#f0f0f0;box-shadow:inset 1px 1px 0 #fff"></div>
<div class="a" style="left:0;top:233px;width:12px;height:1px;background:#000"></div><div class="a" style="left:11px;top:216px;width:1px;height:18px;background:#000"></div>
<div class="a" style="left:12px;top:216px;width:195px;height:18px;background:#5eadff;border-bottom:1px solid #c0c0c0"></div>
<div class="cell n" style="left:14px;top:216px;width:66px">1000000015</div>
<div class="cell tr" style="left:82px;top:216px;width:84px">TR39001208716</div>
<div class="cell" style="left:168px;top:216px;width:60px;letter-spacing:0">02.01.2017</div>
<svg class="a" style="left:3px;top:218px" width="7" height="13" viewBox="0 0 7 13"><path d="M0 0 L6.5 6.5 L0 13Z" fill="#000"/></svg>
<div class="a" style="left:0;top:234px;width:11px;height:17px;background:#f0f0f0;box-shadow:inset 1px 1px 0 #fff"></div>
<div class="a" style="left:0;top:251px;width:12px;height:1px;background:#000"></div><div class="a" style="left:11px;top:234px;width:1px;height:18px;background:#000"></div>
<div class="a" style="left:12px;top:234px;width:195px;height:18px;background:#ffb3ff;border-bottom:1px solid #c0c0c0"></div>
<div class="cell n" style="left:14px;top:234px;width:66px">1000000017</div>
<div class="cell tr" style="left:82px;top:234px;width:84px">TR35003364871</div>
<div class="cell" style="left:168px;top:234px;width:60px;letter-spacing:0">05.03.2018</div>
<div class="a" style="left:0;top:252px;width:11px;height:17px;background:#f0f0f0;box-shadow:inset 1px 1px 0 #fff"></div>
<div class="a" style="left:0;top:269px;width:12px;height:1px;background:#000"></div><div class="a" style="left:11px;top:252px;width:1px;height:18px;background:#000"></div>
<div class="a" style="left:12px;top:252px;width:195px;height:18px;background:#ffb3ff;border-bottom:1px solid #c0c0c0"></div>
<div class="cell n" style="left:14px;top:252px;width:66px">1000000018</div>
<div class="cell tr" style="left:82px;top:252px;width:84px">TR35003364869</div>
<div class="cell" style="left:168px;top:252px;width:60px;letter-spacing:0">07.03.2018</div>
<div class="a" style="left:0;top:270px;width:11px;height:17px;background:#f0f0f0;box-shadow:inset 1px 1px 0 #fff"></div>
<div class="a" style="left:0;top:287px;width:12px;height:1px;background:#000"></div><div class="a" style="left:11px;top:270px;width:1px;height:18px;background:#000"></div>
<div class="a" style="left:12px;top:270px;width:195px;height:18px;background:#ffb3ff;border-bottom:1px solid #c0c0c0"></div>
<div class="cell n" style="left:14px;top:270px;width:66px">1000000021</div>
<div class="cell tr" style="left:82px;top:270px;width:84px">TR35003364868</div>
<div class="cell" style="left:168px;top:270px;width:60px;letter-spacing:0">24.03.2018</div>
<div class="a" style="left:0;top:288px;width:11px;height:17px;background:#f0f0f0;box-shadow:inset 1px 1px 0 #fff"></div>
<div class="a" style="left:0;top:305px;width:12px;height:1px;background:#000"></div><div class="a" style="left:11px;top:288px;width:1px;height:18px;background:#000"></div>
<div class="a" style="left:12px;top:288px;width:195px;height:18px;background:#ffb3ff;border-bottom:1px solid #c0c0c0"></div>
<div class="cell n" style="left:14px;top:288px;width:66px">1000000022</div>
<div class="cell tr" style="left:82px;top:288px;width:84px">TR35003364870</div>
<div class="cell" style="left:168px;top:288px;width:60px;letter-spacing:0">29.03.2018</div>
<div class="a" style="left:0;top:306px;width:11px;height:17px;background:#f0f0f0;box-shadow:inset 1px 1px 0 #fff"></div>
<div class="a" style="left:0;top:323px;width:12px;height:1px;background:#000"></div><div class="a" style="left:11px;top:306px;width:1px;height:18px;background:#000"></div>
<div class="a" style="left:12px;top:306px;width:195px;height:18px;background:#ffb3ff;border-bottom:1px solid #c0c0c0"></div>
<div class="cell n" style="left:14px;top:306px;width:66px">1000000025</div>
<div class="cell tr" style="left:82px;top:306px;width:84px">TR35003364872</div>
<div class="cell" style="left:168px;top:306px;width:60px;letter-spacing:0">27.04.2018</div>
<div class="a" style="left:0;top:324px;width:11px;height:17px;background:#f0f0f0;box-shadow:inset 1px 1px 0 #fff"></div>
<div class="a" style="left:0;top:341px;width:12px;height:1px;background:#000"></div><div class="a" style="left:11px;top:324px;width:1px;height:18px;background:#000"></div>
<div class="a" style="left:12px;top:324px;width:195px;height:18px;background:#5eadff;border-bottom:1px solid #c0c0c0"></div>
<div class="cell n" style="left:14px;top:324px;width:66px">1000000026</div>
<div class="cell tr" style="left:82px;top:324px;width:84px">TR35003364877</div>
<div class="cell" style="left:168px;top:324px;width:60px;letter-spacing:0">27.04.2018</div>
<div class="a" style="left:0;top:342px;width:11px;height:17px;background:#f0f0f0;box-shadow:inset 1px 1px 0 #fff"></div>
<div class="a" style="left:0;top:359px;width:12px;height:1px;background:#000"></div><div class="a" style="left:11px;top:342px;width:1px;height:18px;background:#000"></div>
<div class="a" style="left:12px;top:342px;width:195px;height:18px;background:#ffb3ff;border-bottom:1px solid #c0c0c0"></div>
<div class="cell n" style="left:14px;top:342px;width:66px">1000000032</div>
<div class="cell " style="left:82px;top:342px;width:84px">Küpe No Yok</div>
<div class="cell" style="left:168px;top:342px;width:60px;letter-spacing:0">15.12.2018</div>
<div class="a" style="left:0;top:360px;width:11px;height:17px;background:#f0f0f0;box-shadow:inset 1px 1px 0 #fff"></div>
<div class="a" style="left:0;top:377px;width:12px;height:1px;background:#000"></div><div class="a" style="left:11px;top:360px;width:1px;height:18px;background:#000"></div>
<div class="a" style="left:12px;top:360px;width:195px;height:18px;background:#ffb3ff;border-bottom:1px solid #c0c0c0"></div>
<div class="cell n" style="left:14px;top:360px;width:66px">1000000033</div>
<div class="cell " style="left:82px;top:360px;width:84px">Küpe No Yok</div>
<div class="cell" style="left:168px;top:360px;width:60px;letter-spacing:0">18.12.2018</div>
<div class="a" style="left:0;top:378px;width:11px;height:17px;background:#f0f0f0;box-shadow:inset 1px 1px 0 #fff"></div>
<div class="a" style="left:0;top:395px;width:12px;height:1px;background:#000"></div><div class="a" style="left:11px;top:378px;width:1px;height:18px;background:#000"></div>
<div class="a" style="left:12px;top:378px;width:195px;height:18px;background:#ffb3ff;border-bottom:1px solid #c0c0c0"></div>
<div class="cell n" style="left:14px;top:378px;width:66px">1000000034</div>
<div class="cell " style="left:82px;top:378px;width:84px">Küpe No Yok</div>
<div class="cell" style="left:168px;top:378px;width:60px;letter-spacing:0">30.12.2018</div>
<div class="a" style="left:0;top:396px;width:11px;height:17px;background:#f0f0f0;box-shadow:inset 1px 1px 0 #fff"></div>
<div class="a" style="left:0;top:413px;width:12px;height:1px;background:#000"></div><div class="a" style="left:11px;top:396px;width:1px;height:18px;background:#000"></div>
<div class="a" style="left:12px;top:396px;width:195px;height:18px;background:#ffb3ff;border-bottom:1px solid #c0c0c0"></div>
<div class="cell n" style="left:14px;top:396px;width:66px">1000000037</div>
<div class="cell " style="left:82px;top:396px;width:84px">Küpe No Yok</div>
<div class="cell" style="left:168px;top:396px;width:60px;letter-spacing:0">16.01.2019</div>
<div class="a" style="left:0;top:414px;width:11px;height:17px;background:#f0f0f0;box-shadow:inset 1px 1px 0 #fff"></div>
<div class="a" style="left:0;top:431px;width:12px;height:1px;background:#000"></div><div class="a" style="left:11px;top:414px;width:1px;height:18px;background:#000"></div>
<div class="a" style="left:12px;top:414px;width:195px;height:18px;background:#ffb3ff;border-bottom:1px solid #c0c0c0"></div>
<div class="cell n" style="left:14px;top:414px;width:66px">1000000039</div>
<div class="cell " style="left:82px;top:414px;width:84px">Küpe No Yok</div>
<div class="cell" style="left:168px;top:414px;width:60px;letter-spacing:0">04.03.2019</div>
<div class="a" style="left:0;top:432px;width:11px;height:17px;background:#f0f0f0;box-shadow:inset 1px 1px 0 #fff"></div>
<div class="a" style="left:0;top:449px;width:12px;height:1px;background:#000"></div><div class="a" style="left:11px;top:432px;width:1px;height:18px;background:#000"></div>
<div class="a" style="left:12px;top:432px;width:195px;height:18px;background:#ffb3ff;border-bottom:1px solid #c0c0c0"></div>
<div class="cell n" style="left:14px;top:432px;width:66px">1000000042</div>
<div class="cell " style="left:82px;top:432px;width:84px">Küpe No Yok</div>
<div class="cell" style="left:168px;top:432px;width:60px;letter-spacing:0">12.03.2019</div>
<div class="a" style="left:0;top:450px;width:11px;height:17px;background:#f0f0f0;box-shadow:inset 1px 1px 0 #fff"></div>
<div class="a" style="left:0;top:467px;width:12px;height:1px;background:#000"></div><div class="a" style="left:11px;top:450px;width:1px;height:18px;background:#000"></div>
<div class="a" style="left:12px;top:450px;width:195px;height:18px;background:#5eadff;border-bottom:1px solid #c0c0c0"></div>
<div class="cell n" style="left:14px;top:450px;width:66px">1000000044</div>
<div class="cell " style="left:82px;top:450px;width:84px">Küpe No Yok</div>
<div class="cell" style="left:168px;top:450px;width:60px;letter-spacing:0">03.05.2019</div>
<div class="a" style="left:0;top:468px;width:11px;height:17px;background:#f0f0f0;box-shadow:inset 1px 1px 0 #fff"></div>
<div class="a" style="left:0;top:485px;width:12px;height:1px;background:#000"></div><div class="a" style="left:11px;top:468px;width:1px;height:18px;background:#000"></div>
<div class="a" style="left:12px;top:468px;width:195px;height:18px;background:#5eadff;border-bottom:1px solid #c0c0c0"></div>
<div class="cell n" style="left:14px;top:468px;width:66px">1000000045</div>
<div class="cell " style="left:82px;top:468px;width:84px">Küpe No Yok</div>
<div class="cell" style="left:168px;top:468px;width:60px;letter-spacing:0">26.11.2019</div>
<div class="a" style="left:0;top:486px;width:11px;height:17px;background:#f0f0f0;box-shadow:inset 1px 1px 0 #fff"></div>
<div class="a" style="left:0;top:503px;width:12px;height:1px;background:#000"></div><div class="a" style="left:11px;top:486px;width:1px;height:18px;background:#000"></div>
<div class="a" style="left:12px;top:486px;width:195px;height:18px;background:#5eadff;border-bottom:1px solid #c0c0c0"></div>
<div class="cell n" style="left:14px;top:486px;width:66px">1000000046</div>
<div class="cell " style="left:82px;top:486px;width:84px">Küpe No Yok</div>
<div class="cell" style="left:168px;top:486px;width:60px;letter-spacing:0">05.12.2019</div>
<div class="a" style="left:0;top:504px;width:11px;height:17px;background:#f0f0f0;box-shadow:inset 1px 1px 0 #fff"></div>
<div class="a" style="left:0;top:521px;width:12px;height:1px;background:#000"></div><div class="a" style="left:11px;top:504px;width:1px;height:18px;background:#000"></div>
<div class="a" style="left:12px;top:504px;width:195px;height:18px;background:#ffb3ff;border-bottom:1px solid #c0c0c0"></div>
<div class="cell n" style="left:14px;top:504px;width:66px">1000000047</div>
<div class="cell " style="left:82px;top:504px;width:84px">Küpe No Yok</div>
<div class="cell" style="left:168px;top:504px;width:60px;letter-spacing:0">05.12.2019</div>
<div class="a" style="left:0;top:522px;width:11px;height:17px;background:#f0f0f0;box-shadow:inset 1px 1px 0 #fff"></div>
<div class="a" style="left:0;top:539px;width:12px;height:1px;background:#000"></div><div class="a" style="left:11px;top:522px;width:1px;height:18px;background:#000"></div>
<div class="a" style="left:12px;top:522px;width:195px;height:18px;background:#ffb3ff;border-bottom:1px solid #c0c0c0"></div>
<div class="cell n" style="left:14px;top:522px;width:66px">1000000048</div>
<div class="cell " style="left:82px;top:522px;width:84px">Küpe No Yok</div>
<div class="cell" style="left:168px;top:522px;width:60px;letter-spacing:0">09.12.2019</div>
<div class="a" style="left:0;top:540px;width:11px;height:17px;background:#f0f0f0;box-shadow:inset 1px 1px 0 #fff"></div>
<div class="a" style="left:0;top:557px;width:12px;height:1px;background:#000"></div><div class="a" style="left:11px;top:540px;width:1px;height:18px;background:#000"></div>
<div class="a" style="left:12px;top:540px;width:195px;height:18px;background:#ffb3ff;border-bottom:1px solid #c0c0c0"></div>
<div class="cell n" style="left:14px;top:540px;width:66px">1000000049</div>
<div class="cell " style="left:82px;top:540px;width:84px">Küpe No Yok</div>
<div class="cell" style="left:168px;top:540px;width:60px;letter-spacing:0">09.12.2019</div>
<div class="a" style="left:79px;top:18px;width:1px;height:540px;background:#c0c0c0"></div>
<div class="a" style="left:165px;top:18px;width:1px;height:540px;background:#c0c0c0"></div>
</div>
<div class="sb" style="left:210px;top:118px;width:17px;height:563px;background:linear-gradient(90deg,#e6e6e6 0,#f1f1f1 4px,#f3f3f3 100%)"></div>
<svg class="a" style="left:216px;top:125px" width="7" height="4" viewBox="0 0 7 4"><path d="M0 4 L3.5 0 L7 4Z" fill="#555"/></svg>
<svg class="a" style="left:216px;top:670px" width="7" height="4" viewBox="0 0 7 4"><path d="M0 0 L7 0 L3.5 4Z" fill="#555"/></svg>
<div class="thumb" style="left:211px;top:224px;width:15px;height:238px;background:linear-gradient(90deg,#f4f4f4 0,#e9e9eb 45%,#d0d0d4 55%,#dcdce0 100%)"></div>
<div class="a" style="left:215px;top:339px;width:7px;height:1px;background:#4f4f4f;box-shadow:0 1px 0 #fff"></div>
<div class="a" style="left:215px;top:342px;width:7px;height:1px;background:#4f4f4f;box-shadow:0 1px 0 #fff"></div>
<div class="a" style="left:215px;top:345px;width:7px;height:1px;background:#4f4f4f;box-shadow:0 1px 0 #fff"></div>
<div class="sb" style="left:3px;top:681px;width:207px;height:17px;background:linear-gradient(#e6e6e6 0,#f1f1f1 4px,#f3f3f3 100%)"></div>
<svg class="a" style="left:9px;top:685px" width="4" height="7" viewBox="0 0 4 7"><path d="M4 0 L0 3.5 L4 7Z" fill="#555"/></svg>
<svg class="a" style="left:200px;top:685px" width="4" height="7" viewBox="0 0 4 7"><path d="M0 0 L4 3.5 L0 7Z" fill="#555"/></svg>
<div class="thumb" style="left:21px;top:681px;width:15px;height:15px;background:linear-gradient(#f4f4f4 0,#e9e9eb 45%,#d0d0d4 55%,#dcdce0 100%)"></div>
<div class="sb" style="left:210px;top:681px;width:18px;height:18px;background:#f0f0f0"></div>
<div class="a" style="left:3px;top:676px;width:207px;height:5px;background:#fff"></div>
<div class="a" style="left:230px;top:117px;width:1134px;height:582px;background:#fff;border:1px solid #828790"></div>
<div class="a" style="left:234px;top:121px;width:1124px;height:57px;background:#f0f0f0"></div>
<div class="a" style="left:234px;top:121px;width:1124px;height:4px;background:linear-gradient(#a0a0a0 0,#a0a0a0 25%,#696969 25%,#696969 50%,#a0a0a0 50%,#a0a0a0 75%,#696969 75%)"></div>
<div class="a" style="left:234px;top:121px;width:4px;height:57px;background:linear-gradient(90deg,#a0a0a0 0,#a0a0a0 25%,#696969 25%,#696969 50%,#a0a0a0 50%,#a0a0a0 75%,#696969 75%)"></div>
<div class="a" style="left:1358px;top:125px;width:1px;height:53px;background:#e3e3e3"></div>
<div class="a" style="left:1358px;top:121px;width:2px;height:4px;background:linear-gradient(135deg,#696969 0,#696969 45%,#fff 55%)"></div>
<div class="a" style="left:236px;top:179px;width:1122px;height:60px;background:#f0f0f0;border-top:2px solid #fff;border-left:1px solid #fff"></div>
<div class="a" style="left:1358px;top:181px;width:2px;height:60px;background:#a0a0a0"></div>
<div class="a" style="left:236px;top:239px;width:1124px;height:2px;background:#999"></div>
<div class="a" style="left:234px;top:122px;width:2px;height:572px;background:linear-gradient(90deg,#a0a0a0 50%,#696969 50%)"></div>
<div class="btn" style="left:244px;top:129px;width:30px;height:48px"></div>
<svg class="a" style="left:252px;top:148px" width="14" height="12" viewBox="0 0 14 12"><path d="M1.7 2.2h1.8v7.6H1.7z M12.3 2.2v7.6L4.8 6z" fill="#000"/></svg>
<div class="btn" style="left:276px;top:129px;width:30px;height:48px"></div>
<svg class="a" style="left:284px;top:148px" width="14" height="12" viewBox="0 0 14 12"><path d="M10.6 2.4v7.2L2.8 6z" fill="#000"/></svg>
<div class="btn" style="left:308px;top:129px;width:30px;height:48px"></div>
<svg class="a" style="left:316px;top:148px" width="14" height="12" viewBox="0 0 14 12"><path d="M3.4 2.4v7.2L11.2 6z" fill="#000"/></svg>
<div class="btn" style="left:340px;top:129px;width:30px;height:48px"></div>
<svg class="a" style="left:348px;top:148px" width="14" height="12" viewBox="0 0 14 12"><path d="M10.5 2.2h1.8v7.6h-1.8z M1.7 2.2v7.6L9.2 6z" fill="#000"/></svg>
<div class="btn" style="left:372px;top:129px;width:30px;height:48px"></div>
<svg class="a" style="left:380px;top:148px" width="14" height="12" viewBox="0 0 14 12"><path d="M5.6 1.3h2.8v3.3h3.3v2.8H8.4v3.3H5.6V7.4H2.3V4.6h3.3z" fill="#000"/></svg>
<div class="btn" style="left:404px;top:129px;width:30px;height:48px"></div>
<svg class="a" style="left:412px;top:148px" width="14" height="12" viewBox="0 0 14 12"><path d="M1.8 4h10.4v3.6H1.8z" fill="#000"/></svg>
<div class="btn" style="left:436px;top:129px;width:30px;height:48px"></div>
<svg class="a" style="left:444px;top:148px" width="14" height="12" viewBox="0 0 14 12"><path d="M1.8 8.4L7 3.2 L12.2 8.4z" fill="#000"/></svg>
<div class="btn dis" style="left:468px;top:129px;width:30px;height:48px"></div>
<svg class="a" style="left:476px;top:148px" width="14" height="12" viewBox="0 0 14 12"><path d="M1.2 6.2 L3 4.8 L5 6.8 L11.4 0.6 L13.6 1.4 L5.2 10.6 L1.2 6.2z" fill="#fdfdfd" stroke="#fdfdfd" stroke-width=".6"/><path d="M1.2 5.6 L2.6 4.6 L4.6 6.4 L11.6 0.8 L13.2 1.2" fill="none" stroke="#b9bdc0" stroke-width=".9"/></svg>
<div class="btn dis" style="left:500px;top:129px;width:30px;height:48px"></div>
<svg class="a" style="left:508px;top:148px" width="14" height="12" viewBox="0 0 14 12"><path d="M2.4 1.6 L11.8 11 M11.8 1.6 L2.4 11" fill="none" stroke="#fff" stroke-width="1.6"/><path d="M2 1 L11.4 10.4 M11.4 1 L2 10.4" fill="none" stroke="#b9bdc0" stroke-width=".9"/></svg>
<div class="btn" style="left:532px;top:129px;width:30px;height:48px"></div>
<svg class="a" style="left:540px;top:148px" width="14" height="12" viewBox="0 0 14 12"><path d="M7.2 10 Q3 8.8 3.5 5.4 Q4.3 2.2 7.4 2.5 Q9 2.7 10.2 4" fill="none" stroke="#000" stroke-width="2.3"/><path d="M11.9 0.9 L11.9 5.8 L7 5.8 z" fill="#000"/></svg>
<div class="btn" style="left:569px;top:129px;width:122px;height:48px;line-height:46px">Yeni Kayıt</div>
<div class="btn" style="left:698px;top:129px;width:122px;height:48px;line-height:46px">Kaydet</div>
<div class="btn" style="left:827px;top:129px;width:122px;height:48px;line-height:46px">Kaydı Sil</div>
<div class="btn" style="left:956px;top:129px;width:122px;height:48px;line-height:46px">Toplu Hayvan Girişi</div>
<div class="btn" style="left:1085px;top:129px;width:122px;height:48px;line-height:46px">Künyeleri Raporla</div>
<div class="btn hot" style="left:1214px;top:129px;width:122px;height:48px;line-height:46px">Filitreleri Kapat</div>
<div class="lbl" style="left:231px;top:194px;width:142px;text-align:center">Cinsiyet Filtresi</div>
<div class="combo" style="left:241px;top:218px;width:123px;height:20px"></div>
<div class="lbl" style="left:244px;top:221px;height:13px;line-height:15px;background:#3399ff;color:#fff;padding:0 1px 0 0">Hepsi</div>
<svg class="a" style="left:350px;top:227px" width="8" height="5" viewBox="0 0 8 5"><path d="M0 0 H8 L4 4.5Z" fill="#000"/></svg>
<div class="lbl" style="left:358px;top:194px;width:142px;text-align:center">Kardeş Sayısı Filtresi</div>
<div class="combo" style="left:368px;top:218px;width:123px;height:20px"></div>
<div class="lbl" style="left:371px;top:221px;height:13px;line-height:15px;background:#3399ff;color:#fff;padding:0 1px 0 0">Hepsi</div>
<svg class="a" style="left:477px;top:227px" width="8" height="5" viewBox="0 0 8 5"><path d="M0 0 H8 L4 4.5Z" fill="#000"/></svg>
<div class="lbl" style="left:485px;top:194px;width:142px;text-align:center">Sürüdeki Durum Filtresi</div>
<div class="combo" style="left:495px;top:218px;width:123px;height:20px"></div>
<div class="lbl" style="left:498px;top:221px;height:13px;line-height:15px;background:#3399ff;color:#fff;padding:0 1px 0 0">Hepsi</div>
<svg class="a" style="left:604px;top:227px" width="8" height="5" viewBox="0 0 8 5"><path d="M0 0 H8 L4 4.5Z" fill="#000"/></svg>
<div class="lbl" style="left:612px;top:194px;width:142px;text-align:center">Katılış Şekli Filtresi</div>
<div class="combo" style="left:622px;top:218px;width:123px;height:20px"></div>
<div class="lbl" style="left:625px;top:221px;height:13px;line-height:15px;background:#3399ff;color:#fff;padding:0 1px 0 0">Hepsi</div>
<svg class="a" style="left:731px;top:227px" width="8" height="5" viewBox="0 0 8 5"><path d="M0 0 H8 L4 4.5Z" fill="#000"/></svg>
<div class="lbl" style="left:739px;top:194px;width:142px;text-align:center">Ayrılış Şekli Filtresi</div>
<div class="combo" style="left:749px;top:218px;width:123px;height:20px"></div>
<div class="lbl" style="left:752px;top:221px;height:13px;line-height:15px;background:#3399ff;color:#fff;padding:0 1px 0 0">Hepsi</div>
<svg class="a" style="left:858px;top:227px" width="8" height="5" viewBox="0 0 8 5"><path d="M0 0 H8 L4 4.5Z" fill="#000"/></svg>
<div class="lbl" style="left:866px;top:194px;width:142px;text-align:center">Yetkili Filtresi</div>
<div class="combo" style="left:876px;top:218px;width:123px;height:20px"></div>
<div class="lbl" style="left:879px;top:221px;height:13px;line-height:15px;background:#3399ff;color:#fff;padding:0 1px 0 0">Hepsi</div>
<svg class="a" style="left:985px;top:227px" width="8" height="5" viewBox="0 0 8 5"><path d="M0 0 H8 L4 4.5Z" fill="#000"/></svg>
<div class="a" style="left:1010px;top:182px;width:152px;height:55px;border:1px solid #d5dfe5;border-radius:3px"></div>
<div class="a" style="left:1018px;top:192px;width:12px;height:12px;border-radius:50%;border:1px solid #8e8f8f;background:radial-gradient(circle at 40% 40%,#fdfdfd 0,#e9e9e9 50%,#cfd2d6 100%)"></div><div class="a" style="left:1021px;top:195px;width:6px;height:6px;border-radius:50%;background:radial-gradient(circle at 35% 35%,#9fd0f5 0,#1c6bb5 55%,#0c2f66 100%)"></div>
<div class="lbl" style="left:1034px;top:192px">Hiçbiri</div>
<div class="a" style="left:1088px;top:192px;width:12px;height:12px;border-radius:50%;border:1px solid #8e8f8f;background:radial-gradient(circle at 40% 40%,#fdfdfd 0,#e9e9e9 50%,#cfd2d6 100%)"></div>
<div class="lbl" style="left:1104px;top:192px">Ayrılış</div>
<div class="a" style="left:1018px;top:216px;width:12px;height:12px;border-radius:50%;border:1px solid #8e8f8f;background:radial-gradient(circle at 40% 40%,#fdfdfd 0,#e9e9e9 50%,#cfd2d6 100%)"></div>
<div class="lbl" style="left:1034px;top:216px">Doğum</div>
<div class="a" style="left:1088px;top:216px;width:12px;height:12px;border-radius:50%;border:1px solid #8e8f8f;background:radial-gradient(circle at 40% 40%,#fdfdfd 0,#e9e9e9 50%,#cfd2d6 100%)"></div>
<div class="lbl" style="left:1104px;top:216px">Katılış</div>
<div class="lbl" style="left:1113px;top:189px;width:100px;text-align:right">Başlangıç</div>
<div class="lbl" style="left:1113px;top:214px;width:100px;text-align:right">Bitiş</div>
<div class="combo" style="left:1254px;top:184px;width:100px;height:21px"></div>
<div class="lbl" style="left:1257px;top:189px;letter-spacing:0.1px">29.12.2019</div>
<svg class="a" style="left:1326px;top:188px" width="22" height="13" viewBox="0 0 22 13"><rect x="2.5" y="1.5" width="9" height="10.5" rx="1" fill="#dcdce2" stroke="#6b5f62" stroke-width="1"/><rect x="1.5" y="0.5" width="9" height="10.5" rx="1" fill="#f1f1f5" stroke="#6b5f62" stroke-width="1"/><rect x="3" y="3.5" width="6" height="6.5" fill="#b4b8c4"/><path d="M3 5.6h6M3 7.8h6M5 3.5v6.5M7 3.5v6.5" stroke="#f4f4fa" stroke-width=".7"/><path d="M14 4.5h7l-3.5 4z" fill="#44618f"/></svg>
<div class="combo" style="left:1254px;top:211px;width:100px;height:21px"></div>
<div class="lbl" style="left:1257px;top:216px;letter-spacing:0.1px">29.12.2019</div>
<svg class="a" style="left:1326px;top:215px" width="22" height="13" viewBox="0 0 22 13"><rect x="2.5" y="1.5" width="9" height="10.5" rx="1" fill="#dcdce2" stroke="#6b5f62" stroke-width="1"/><rect x="1.5" y="0.5" width="9" height="10.5" rx="1" fill="#f1f1f5" stroke="#6b5f62" stroke-width="1"/><rect x="3" y="3.5" width="6" height="6.5" fill="#b4b8c4"/><path d="M3 5.6h6M3 7.8h6M5 3.5v6.5M7 3.5v6.5" stroke="#f4f4fa" stroke-width=".7"/><path d="M14 4.5h7l-3.5 4z" fill="#44618f"/></svg>
<div class="a" style="left:236px;top:241px;width:1124px;height:453px;background:#fff;border-right:1px solid #a0a0a0;border-bottom:1px solid #a0a0a0"></div>
<div class="a" style="left:237px;top:241px;width:1105px;height:433px;overflow:hidden;background:#fff">
<div class="hdr" style="left:0px;top:1px;width:12px;padding-left:2px"></div><div class="a" style="left:12px;top:1px;width:1px;height:17px;background:#000"></div>
<div class="hdr" style="left:13px;top:1px;width:154px;padding-left:2px">İşletme No</div><div class="a" style="left:167px;top:1px;width:1px;height:17px;background:#000"></div>
<div class="hdr" style="left:168px;top:1px;width:154px;padding-left:2px">Küpe Numarası</div><div class="a" style="left:322px;top:1px;width:1px;height:17px;background:#000"></div>
<div class="hdr" style="left:323px;top:1px;width:65px;padding-left:2px;letter-spacing:-0.62px">Doğum Sırası</div><div class="a" style="left:388px;top:1px;width:1px;height:17px;background:#000"></div>
<div class="hdr" style="left:389px;top:1px;width:208px;padding-left:2px">Doğum Tarihi</div><div class="a" style="left:597px;top:1px;width:1px;height:17px;background:#000"></div>
<div class="hdr" style="left:598px;top:1px;width:66px;padding-left:2px">Doğum Tarihi</div><div class="a" style="left:664px;top:1px;width:1px;height:17px;background:#000"></div>
<div class="hdr" style="left:665px;top:1px;width:64px;padding-left:2px">Cinsiyet</div><div class="a" style="left:729px;top:1px;width:1px;height:17px;background:#000"></div>
<div class="hdr" style="left:730px;top:1px;width:67px;padding-left:2px">Kardeş Sayısı</div><div class="a" style="left:797px;top:1px;width:1px;height:17px;background:#000"></div>
<div class="hdr" style="left:798px;top:1px;width:85px;padding-left:2px">Sürüdeki Durumu</div><div class="a" style="left:883px;top:1px;width:1px;height:17px;background:#000"></div>
<div class="hdr" style="left:884px;top:1px;width:64px;padding-left:2px">Katılış Şekli</div><div class="a" style="left:948px;top:1px;width:1px;height:17px;background:#000"></div>
<div class="hdr" style="left:949px;top:1px;width:64px;padding-left:2px">Ayrılış Şekli</div><div class="a" style="left:1013px;top:1px;width:1px;height:17px;background:#000"></div>
<div class="hdr" style="left:1014px;top:1px;width:90px;padding-left:2px">Anne Küpe No</div><div class="a" style="left:1104px;top:1px;width:1px;height:17px;background:#b0b0b0"></div>
<div class="a" style="left:0;top:18px;width:1105px;height:1px;background:#000"></div>
<div class="a" style="left:0;top:19px;width:12px;height:17px;background:#f0f0f0;box-shadow:inset 1px 1px 0 #fff"></div>
<div class="a" style="left:0;top:36px;width:13px;height:1px;background:#000"></div><div class="a" style="left:12px;top:19px;width:1px;height:18px;background:#000"></div>
<div class="a" style="left:13px;top:19px;width:1091px;height:18px;background:#ffb3ff;border-bottom:1px solid #c0c0c0"></div>
<div class="cell n" style="left:15px;top:19px;width:152px">1000000001</div>
<div class="cell tr" style="left:170px;top:19px;width:152px">TR39001208655</div>
<div class="cell d" style="left:391px;top:19px;width:206px">02.01.2017</div>
<div class="cell n" style="left:600px;top:19px;width:64px">2017-01-02</div>
<div class="cell" style="left:667px;top:19px;width:62px">Dişi</div>
<div class="cell" style="left:800px;top:19px;width:83px">Sürüde</div>
<div class="cell" style="left:886px;top:19px;width:62px">Satın alma</div>
<div class="cell" style="left:951px;top:19px;width:62px">Sürüde</div>
<div class="a" style="left:0;top:37px;width:12px;height:17px;background:#f0f0f0;box-shadow:inset 1px 1px 0 #fff"></div>
<div class="a" style="left:0;top:54px;width:13px;height:1px;background:#000"></div><div class="a" style="left:12px;top:37px;width:1px;height:18px;background:#000"></div>
<div class="a" style="left:13px;top:37px;width:1091px;height:18px;background:#ffb3ff;border-bottom:1px solid #c0c0c0"></div>
<div class="cell n" style="left:15px;top:37px;width:152px">1000000003</div>
<div class="cell tr" style="left:170px;top:37px;width:152px">TR39001208620</div>
<div class="cell d" style="left:391px;top:37px;width:206px">02.01.2017</div>
<div class="cell n" style="left:600px;top:37px;width:64px">2017-01-02</div>
<div class="cell" style="left:667px;top:37px;width:62px">Dişi</div>
<div class="cell" style="left:800px;top:37px;width:83px">Sürüde</div>
<div class="cell" style="left:886px;top:37px;width:62px">Satın alma</div>
<div class="cell" style="left:951px;top:37px;width:62px">Sürüde</div>
<div class="a" style="left:0;top:55px;width:12px;height:17px;background:#f0f0f0;box-shadow:inset 1px 1px 0 #fff"></div>
<div class="a" style="left:0;top:72px;width:13px;height:1px;background:#000"></div><div class="a" style="left:12px;top:55px;width:1px;height:18px;background:#000"></div>
<div class="a" style="left:13px;top:55px;width:1091px;height:18px;background:#ffb3ff;border-bottom:1px solid #c0c0c0"></div>
<div class="cell n" style="left:15px;top:55px;width:152px">1000000004</div>
<div class="cell tr" style="left:170px;top:55px;width:152px">TR39001208560</div>
<div class="cell d" style="left:391px;top:55px;width:206px">02.01.2017</div>
<div class="cell n" style="left:600px;top:55px;width:64px">2017-01-02</div>
<div class="cell" style="left:667px;top:55px;width:62px">Dişi</div>
<div class="cell" style="left:800px;top:55px;width:83px">Sürüde</div>
<div class="cell" style="left:886px;top:55px;width:62px">Satın alma</div>
<div class="cell" style="left:951px;top:55px;width:62px">Sürüde</div>
<div class="a" style="left:0;top:73px;width:12px;height:17px;background:#f0f0f0;box-shadow:inset 1px 1px 0 #fff"></div>
<div class="a" style="left:0;top:90px;width:13px;height:1px;background:#000"></div><div class="a" style="left:12px;top:73px;width:1px;height:18px;background:#000"></div>
<div class="a" style="left:13px;top:73px;width:1091px;height:18px;background:#ffb3ff;border-bottom:1px solid #c0c0c0"></div>
<div class="cell n" style="left:15px;top:73px;width:152px">1000000006</div>
<div class="cell tr" style="left:170px;top:73px;width:152px">TR39001208575</div>
<div class="cell d" style="left:391px;top:73px;width:206px">02.01.2017</div>
<div class="cell n" style="left:600px;top:73px;width:64px">2017-01-02</div>
<div class="cell" style="left:667px;top:73px;width:62px">Dişi</div>
<div class="cell" style="left:800px;top:73px;width:83px">Sürüde</div>
<div class="cell" style="left:886px;top:73px;width:62px">Satın alma</div>
<div class="cell" style="left:951px;top:73px;width:62px">Sürüde</div>
<div class="a" style="left:0;top:91px;width:12px;height:17px;background:#f0f0f0;box-shadow:inset 1px 1px 0 #fff"></div>
<div class="a" style="left:0;top:108px;width:13px;height:1px;background:#000"></div><div class="a" style="left:12px;top:91px;width:1px;height:18px;background:#000"></div>
<div class="a" style="left:13px;top:91px;width:1091px;height:18px;background:#ffb3ff;border-bottom:1px solid #c0c0c0"></div>
<div class="cell n" style="left:15px;top:91px;width:152px">1000000007</div>
<div class="cell tr" style="left:170px;top:91px;width:152px">TR39001208576</div>
<div class="cell d" style="left:391px;top:91px;width:206px">02.01.2017</div>
<div class="cell n" style="left:600px;top:91px;width:64px">2017-01-02</div>
<div class="cell" style="left:667px;top:91px;width:62px">Dişi</div>
<div class="cell" style="left:800px;top:91px;width:83px">Kuruda</div>
<div class="cell" style="left:886px;top:91px;width:62px">Satın Alma</div>
<div class="cell" style="left:951px;top:91px;width:62px">Sürüde</div>
<div class="a" style="left:0;top:109px;width:12px;height:17px;background:#f0f0f0;box-shadow:inset 1px 1px 0 #fff"></div>
<div class="a" style="left:0;top:126px;width:13px;height:1px;background:#000"></div><div class="a" style="left:12px;top:109px;width:1px;height:18px;background:#000"></div>
<div class="a" style="left:13px;top:109px;width:1091px;height:18px;background:#ffb3ff;border-bottom:1px solid #c0c0c0"></div>
<div class="cell n" style="left:15px;top:109px;width:152px">1000000009</div>
<div class="cell tr" style="left:170px;top:109px;width:152px">TR39001208633</div>
<div class="cell d" style="left:391px;top:109px;width:206px">02.01.2017</div>
<div class="cell n" style="left:600px;top:109px;width:64px">2017-01-02</div>
<div class="cell" style="left:667px;top:109px;width:62px">Dişi</div>
<div class="cell" style="left:800px;top:109px;width:83px">Sağımda</div>
<div class="cell" style="left:886px;top:109px;width:62px">Satın Alma</div>
<div class="cell" style="left:951px;top:109px;width:62px">Sürüde</div>
<div class="a" style="left:0;top:127px;width:12px;height:17px;background:#f0f0f0;box-shadow:inset 1px 1px 0 #fff"></div>
<div class="a" style="left:0;top:144px;width:13px;height:1px;background:#000"></div><div class="a" style="left:12px;top:127px;width:1px;height:18px;background:#000"></div>
<div class="a" style="left:13px;top:127px;width:1091px;height:18px;background:#ffb3ff;border-bottom:1px solid #c0c0c0"></div>
<div class="cell n" style="left:15px;top:127px;width:152px">1000000010</div>
<div class="cell tr" style="left:170px;top:127px;width:152px">TR39001208651</div>
<div class="cell d" style="left:391px;top:127px;width:206px">02.01.2017</div>
<div class="cell n" style="left:600px;top:127px;width:64px">2017-01-02</div>
<div class="cell" style="left:667px;top:127px;width:62px">Dişi</div>
<div class="cell" style="left:800px;top:127px;width:83px">Sağımda</div>
<div class="cell" style="left:886px;top:127px;width:62px">Satın Alma</div>
<div class="cell" style="left:951px;top:127px;width:62px">Sürüde</div>
<div class="a" style="left:0;top:145px;width:12px;height:17px;background:#f0f0f0;box-shadow:inset 1px 1px 0 #fff"></div>
<div class="a" style="left:0;top:162px;width:13px;height:1px;background:#000"></div><div class="a" style="left:12px;top:145px;width:1px;height:18px;background:#000"></div>
<div class="a" style="left:13px;top:145px;width:1091px;height:18px;background:#ffb3ff;border-bottom:1px solid #c0c0c0"></div>
<div class="cell n" style="left:15px;top:145px;width:152px">1000000011</div>
<div class="cell tr" style="left:170px;top:145px;width:152px">TR39001208677</div>
<div class="cell d" style="left:391px;top:145px;width:206px">02.01.2017</div>
<div class="cell n" style="left:600px;top:145px;width:64px">2017-01-02</div>
<div class="cell" style="left:667px;top:145px;width:62px">Dişi</div>
<div class="cell" style="left:800px;top:145px;width:83px">Kuruda</div>
<div class="cell" style="left:886px;top:145px;width:62px">Satın Alma</div>
<div class="cell" style="left:951px;top:145px;width:62px">Sürüde</div>
<div class="a" style="left:0;top:163px;width:12px;height:17px;background:#f0f0f0;box-shadow:inset 1px 1px 0 #fff"></div>
<div class="a" style="left:0;top:180px;width:13px;height:1px;background:#000"></div><div class="a" style="left:12px;top:163px;width:1px;height:18px;background:#000"></div>
<div class="a" style="left:13px;top:163px;width:1091px;height:18px;background:#ffb3ff;border-bottom:1px solid #c0c0c0"></div>
<div class="cell n" style="left:15px;top:163px;width:152px">1000000012</div>
<div class="cell tr" style="left:170px;top:163px;width:152px">TR39001208779</div>
<div class="cell d" style="left:391px;top:163px;width:206px">02.01.2017</div>
<div class="cell n" style="left:600px;top:163px;width:64px">2017-01-02</div>
<div class="cell" style="left:667px;top:163px;width:62px">Dişi</div>
<div class="cell" style="left:800px;top:163px;width:83px">Sağımda</div>
<div class="cell" style="left:886px;top:163px;width:62px">Satın Alma</div>
<div class="cell" style="left:951px;top:163px;width:62px">Sürüde</div>
<div class="a" style="left:0;top:181px;width:12px;height:17px;background:#f0f0f0;box-shadow:inset 1px 1px 0 #fff"></div>
<div class="a" style="left:0;top:198px;width:13px;height:1px;background:#000"></div><div class="a" style="left:12px;top:181px;width:1px;height:18px;background:#000"></div>
<div class="a" style="left:13px;top:181px;width:1091px;height:18px;background:#ffb3ff;border-bottom:1px solid #c0c0c0"></div>
<div class="cell n" style="left:15px;top:181px;width:152px">1000000013</div>
<div class="cell tr" style="left:170px;top:181px;width:152px">TR39001208615</div>
<div class="cell d" style="left:391px;top:181px;width:206px">02.01.2017</div>
<div class="cell n" style="left:600px;top:181px;width:64px">2017-01-02</div>
<div class="cell" style="left:667px;top:181px;width:62px">Dişi</div>
<div class="cell" style="left:800px;top:181px;width:83px">Sağımda</div>
<div class="cell" style="left:886px;top:181px;width:62px">Satın Alma</div>
<div class="cell" style="left:951px;top:181px;width:62px">Sürüde</div>
<div class="a" style="left:0;top:199px;width:12px;height:17px;background:#f0f0f0;box-shadow:inset 1px 1px 0 #fff"></div>
<div class="a" style="left:0;top:216px;width:13px;height:1px;background:#000"></div><div class="a" style="left:12px;top:199px;width:1px;height:18px;background:#000"></div>
<div class="a" style="left:13px;top:199px;width:1091px;height:18px;background:#ffb3ff;border-bottom:1px solid #c0c0c0"></div>
<div class="cell n" style="left:15px;top:199px;width:152px">1000000014</div>
<div class="cell tr" style="left:170px;top:199px;width:152px">TR39001208555</div>
<div class="cell d" style="left:391px;top:199px;width:206px">02.01.2017</div>
<div class="cell n" style="left:600px;top:199px;width:64px">2017-01-02</div>
<div class="cell" style="left:667px;top:199px;width:62px">Dişi</div>
<div class="cell" style="left:800px;top:199px;width:83px">Sağımda</div>
<div class="cell" style="left:886px;top:199px;width:62px">Satın Alma</div>
<div class="cell" style="left:951px;top:199px;width:62px">Sürüde</div>
<div class="a" style="left:0;top:217px;width:12px;height:17px;background:#f0f0f0;box-shadow:inset 1px 1px 0 #fff"></div>
<div class="a" style="left:0;top:234px;width:13px;height:1px;background:#000"></div><div class="a" style="left:12px;top:217px;width:1px;height:18px;background:#000"></div>
<div class="a" style="left:13px;top:217px;width:1091px;height:18px;background:#5eadff;border-bottom:1px solid #c0c0c0"></div>
<div class="cell n" style="left:15px;top:217px;width:152px">1000000015</div>
<div class="cell tr" style="left:170px;top:217px;width:152px">TR39001208716</div>
<div class="cell d" style="left:391px;top:217px;width:206px">02.01.2017</div>
<div class="cell n" style="left:600px;top:217px;width:64px">2017-01-02</div>
<div class="cell" style="left:667px;top:217px;width:62px">Erkek</div>
<div class="cell" style="left:800px;top:217px;width:83px">Damızlık</div>
<div class="cell" style="left:886px;top:217px;width:62px">Satın Alma</div>
<div class="cell" style="left:951px;top:217px;width:62px">Sürüde</div>
<svg class="a" style="left:3px;top:219px" width="7" height="13" viewBox="0 0 7 13"><path d="M0 0 L6.5 6.5 L0 13Z" fill="#000"/></svg>
<div class="a" style="left:0;top:235px;width:12px;height:17px;background:#f0f0f0;box-shadow:inset 1px 1px 0 #fff"></div>
<div class="a" style="left:0;top:252px;width:13px;height:1px;background:#000"></div><div class="a" style="left:12px;top:235px;width:1px;height:18px;background:#000"></div>
<div class="a" style="left:13px;top:235px;width:1091px;height:18px;background:#ffb3ff;border-bottom:1px solid #c0c0c0"></div>
<div class="cell n" style="left:15px;top:235px;width:152px">1000000017</div>
<div class="cell tr" style="left:170px;top:235px;width:152px">TR35003364871</div>
<div class="cell n" style="left:323px;top:235px;width:62px;text-align:right">2</div>
<div class="cell d" style="left:391px;top:235px;width:206px">05.03.2018</div>
<div class="cell n" style="left:600px;top:235px;width:64px">2018-03-05</div>
<div class="cell" style="left:667px;top:235px;width:62px">Dişi</div>
<div class="cell n" style="left:730px;top:235px;width:64px;text-align:right">1</div>
<div class="cell" style="left:800px;top:235px;width:83px">Kuruda</div>
<div class="cell" style="left:886px;top:235px;width:62px">Doğum</div>
<div class="cell" style="left:951px;top:235px;width:62px">Sürüde</div>
<div class="cell tr" style="left:1016px;top:235px;width:88px">TR39001208619</div>
<div class="a" style="left:0;top:253px;width:12px;height:17px;background:#f0f0f0;box-shadow:inset 1px 1px 0 #fff"></div>
<div class="a" style="left:0;top:270px;width:13px;height:1px;background:#000"></div><div class="a" style="left:12px;top:253px;width:1px;height:18px;background:#000"></div>
<div class="a" style="left:13px;top:253px;width:1091px;height:18px;background:#ffb3ff;border-bottom:1px solid #c0c0c0"></div>
<div class="cell n" style="left:15px;top:253px;width:152px">1000000018</div>
<div class="cell tr" style="left:170px;top:253px;width:152px">TR35003364869</div>
<div class="cell n" style="left:323px;top:253px;width:62px;text-align:right">3</div>
<div class="cell d" style="left:391px;top:253px;width:206px">07.03.2018</div>
<div class="cell n" style="left:600px;top:253px;width:64px">2018-03-07</div>
<div class="cell" style="left:667px;top:253px;width:62px">Dişi</div>
<div class="cell n" style="left:730px;top:253px;width:64px;text-align:right">1</div>
<div class="cell" style="left:800px;top:253px;width:83px">Sağımda</div>
<div class="cell" style="left:886px;top:253px;width:62px">Doğum</div>
<div class="cell" style="left:951px;top:253px;width:62px">Sürüde</div>
<div class="cell tr" style="left:1016px;top:253px;width:88px">TR39001208620</div>
<div class="a" style="left:0;top:271px;width:12px;height:17px;background:#f0f0f0;box-shadow:inset 1px 1px 0 #fff"></div>
<div class="a" style="left:0;top:288px;width:13px;height:1px;background:#000"></div><div class="a" style="left:12px;top:271px;width:1px;height:18px;background:#000"></div>
<div class="a" style="left:13px;top:271px;width:1091px;height:18px;background:#ffb3ff;border-bottom:1px solid #c0c0c0"></div>
<div class="cell n" style="left:15px;top:271px;width:152px">1000000021</div>
<div class="cell tr" style="left:170px;top:271px;width:152px">TR35003364868</div>
<div class="cell n" style="left:323px;top:271px;width:62px;text-align:right">6</div>
<div class="cell d" style="left:391px;top:271px;width:206px">24.03.2018</div>
<div class="cell n" style="left:600px;top:271px;width:64px">2018-03-24</div>
<div class="cell" style="left:667px;top:271px;width:62px">Dişi</div>
<div class="cell n" style="left:730px;top:271px;width:64px;text-align:right">1</div>
<div class="cell" style="left:800px;top:271px;width:83px">Sağımda</div>
<div class="cell" style="left:886px;top:271px;width:62px">Doğum</div>
<div class="cell" style="left:951px;top:271px;width:62px">Sürüde</div>
<div class="cell tr" style="left:1016px;top:271px;width:88px">TR39001208575</div>
<div class="a" style="left:0;top:289px;width:12px;height:17px;background:#f0f0f0;box-shadow:inset 1px 1px 0 #fff"></div>
<div class="a" style="left:0;top:306px;width:13px;height:1px;background:#000"></div><div class="a" style="left:12px;top:289px;width:1px;height:18px;background:#000"></div>
<div class="a" style="left:13px;top:289px;width:1091px;height:18px;background:#ffb3ff;border-bottom:1px solid #c0c0c0"></div>
<div class="cell n" style="left:15px;top:289px;width:152px">1000000022</div>
<div class="cell tr" style="left:170px;top:289px;width:152px">TR35003364870</div>
<div class="cell n" style="left:323px;top:289px;width:62px;text-align:right">7</div>
<div class="cell d" style="left:391px;top:289px;width:206px">29.03.2018</div>
<div class="cell n" style="left:600px;top:289px;width:64px">2018-03-29</div>
<div class="cell" style="left:667px;top:289px;width:62px">Dişi</div>
<div class="cell n" style="left:730px;top:289px;width:64px;text-align:right">1</div>
<div class="cell" style="left:800px;top:289px;width:83px">Sağımda</div>
<div class="cell" style="left:886px;top:289px;width:62px">Doğum</div>
<div class="cell" style="left:951px;top:289px;width:62px">Sürüde</div>
<div class="cell tr" style="left:1016px;top:289px;width:88px">TR39001208576</div>
<div class="a" style="left:0;top:307px;width:12px;height:17px;background:#f0f0f0;box-shadow:inset 1px 1px 0 #fff"></div>
<div class="a" style="left:0;top:324px;width:13px;height:1px;background:#000"></div><div class="a" style="left:12px;top:307px;width:1px;height:18px;background:#000"></div>
<div class="a" style="left:13px;top:307px;width:1091px;height:18px;background:#ffb3ff;border-bottom:1px solid #c0c0c0"></div>
<div class="cell n" style="left:15px;top:307px;width:152px">1000000025</div>
<div class="cell tr" style="left:170px;top:307px;width:152px">TR35003364872</div>
<div class="cell n" style="left:323px;top:307px;width:62px;text-align:right">10</div>
<div class="cell d" style="left:391px;top:307px;width:206px">27.04.2018</div>
<div class="cell n" style="left:600px;top:307px;width:64px">2018-04-27</div>
<div class="cell" style="left:667px;top:307px;width:62px">Dişi</div>
<div class="cell n" style="left:730px;top:307px;width:64px;text-align:right">1</div>
<div class="cell" style="left:800px;top:307px;width:83px">Sağımda</div>
<div class="cell" style="left:886px;top:307px;width:62px">Doğum</div>
<div class="cell" style="left:951px;top:307px;width:62px">Sürüde</div>
<div class="cell tr" style="left:1016px;top:307px;width:88px">TR39001208651</div>
<div class="a" style="left:0;top:325px;width:12px;height:17px;background:#f0f0f0;box-shadow:inset 1px 1px 0 #fff"></div>
<div class="a" style="left:0;top:342px;width:13px;height:1px;background:#000"></div><div class="a" style="left:12px;top:325px;width:1px;height:18px;background:#000"></div>
<div class="a" style="left:13px;top:325px;width:1091px;height:18px;background:#5eadff;border-bottom:1px solid #c0c0c0"></div>
<div class="cell n" style="left:15px;top:325px;width:152px">1000000026</div>
<div class="cell tr" style="left:170px;top:325px;width:152px">TR35003364877</div>
<div class="cell n" style="left:323px;top:325px;width:62px;text-align:right">11</div>
<div class="cell d" style="left:391px;top:325px;width:206px">27.04.2018</div>
<div class="cell n" style="left:600px;top:325px;width:64px">2018-04-27</div>
<div class="cell" style="left:667px;top:325px;width:62px">Erkek</div>
<div class="cell n" style="left:730px;top:325px;width:64px;text-align:right">1</div>
<div class="cell" style="left:800px;top:325px;width:83px">Damızlık</div>
<div class="cell" style="left:886px;top:325px;width:62px">Doğum</div>
<div class="cell" style="left:951px;top:325px;width:62px">Sürüde</div>
<div class="cell tr" style="left:1016px;top:325px;width:88px">TR39001208677</div>
<div class="a" style="left:0;top:343px;width:12px;height:17px;background:#f0f0f0;box-shadow:inset 1px 1px 0 #fff"></div>
<div class="a" style="left:0;top:360px;width:13px;height:1px;background:#000"></div><div class="a" style="left:12px;top:343px;width:1px;height:18px;background:#000"></div>
<div class="a" style="left:13px;top:343px;width:1091px;height:18px;background:#ffb3ff;border-bottom:1px solid #c0c0c0"></div>
<div class="cell n" style="left:15px;top:343px;width:152px">1000000032</div>
<div class="cell" style="left:170px;top:343px;width:152px">Küpe No Yok</div>
<div class="cell n" style="left:323px;top:343px;width:62px;text-align:right">2</div>
<div class="cell d" style="left:391px;top:343px;width:206px">15.12.2018</div>
<div class="cell n" style="left:600px;top:343px;width:64px">2018-12-15</div>
<div class="cell" style="left:667px;top:343px;width:62px">Dişi</div>
<div class="cell n" style="left:730px;top:343px;width:64px;text-align:right">1</div>
<div class="cell" style="left:800px;top:343px;width:83px">Sağımda</div>
<div class="cell" style="left:886px;top:343px;width:62px">Doğum</div>
<div class="cell" style="left:951px;top:343px;width:62px">Sürüde</div>
<div class="cell tr" style="left:1016px;top:343px;width:88px">TR39001208576</div>
<div class="a" style="left:0;top:361px;width:12px;height:17px;background:#f0f0f0;box-shadow:inset 1px 1px 0 #fff"></div>
<div class="a" style="left:0;top:378px;width:13px;height:1px;background:#000"></div><div class="a" style="left:12px;top:361px;width:1px;height:18px;background:#000"></div>
<div class="a" style="left:13px;top:361px;width:1091px;height:18px;background:#ffb3ff;border-bottom:1px solid #c0c0c0"></div>
<div class="cell n" style="left:15px;top:361px;width:152px">1000000033</div>
<div class="cell" style="left:170px;top:361px;width:152px">Küpe No Yok</div>
<div class="cell n" style="left:323px;top:361px;width:62px;text-align:right">3</div>
<div class="cell d" style="left:391px;top:361px;width:206px">18.12.2018</div>
<div class="cell n" style="left:600px;top:361px;width:64px">2018-12-18</div>
<div class="cell" style="left:667px;top:361px;width:62px">Dişi</div>
<div class="cell n" style="left:730px;top:361px;width:64px;text-align:right">1</div>
<div class="cell" style="left:800px;top:361px;width:83px">Sürüde</div>
<div class="cell" style="left:886px;top:361px;width:62px">Doğum</div>
<div class="cell" style="left:951px;top:361px;width:62px">Sürüde</div>
<div class="cell tr" style="left:1016px;top:361px;width:88px">TR39001208655</div>
<div class="a" style="left:0;top:379px;width:12px;height:17px;background:#f0f0f0;box-shadow:inset 1px 1px 0 #fff"></div>
<div class="a" style="left:0;top:396px;width:13px;height:1px;background:#000"></div><div class="a" style="left:12px;top:379px;width:1px;height:18px;background:#000"></div>
<div class="a" style="left:13px;top:379px;width:1091px;height:18px;background:#ffb3ff;border-bottom:1px solid #c0c0c0"></div>
<div class="cell n" style="left:15px;top:379px;width:152px">1000000034</div>
<div class="cell" style="left:170px;top:379px;width:152px">Küpe No Yok</div>
<div class="cell n" style="left:323px;top:379px;width:62px;text-align:right">4</div>
<div class="cell d" style="left:391px;top:379px;width:206px">30.12.2018</div>
<div class="cell n" style="left:600px;top:379px;width:64px">2018-12-30</div>
<div class="cell" style="left:667px;top:379px;width:62px">Dişi</div>
<div class="cell n" style="left:730px;top:379px;width:64px;text-align:right">1</div>
<div class="cell" style="left:800px;top:379px;width:83px">Sürüde</div>
<div class="cell" style="left:886px;top:379px;width:62px">Doğum</div>
<div class="cell" style="left:951px;top:379px;width:62px">Sürüde</div>
<div class="cell tr" style="left:1016px;top:379px;width:88px">TR39001208620</div>
<div class="a" style="left:0;top:397px;width:12px;height:17px;background:#f0f0f0;box-shadow:inset 1px 1px 0 #fff"></div>
<div class="a" style="left:0;top:414px;width:13px;height:1px;background:#000"></div><div class="a" style="left:12px;top:397px;width:1px;height:18px;background:#000"></div>
<div class="a" style="left:13px;top:397px;width:1091px;height:18px;background:#ffb3ff;border-bottom:1px solid #c0c0c0"></div>
<div class="cell n" style="left:15px;top:397px;width:152px">1000000037</div>
<div class="cell" style="left:170px;top:397px;width:152px">Küpe No Yok</div>
<div class="cell n" style="left:323px;top:397px;width:62px;text-align:right">7</div>
<div class="cell d" style="left:391px;top:397px;width:206px">16.01.2019</div>
<div class="cell n" style="left:600px;top:397px;width:64px">2019-01-16</div>
<div class="cell" style="left:667px;top:397px;width:62px">Dişi</div>
<div class="cell n" style="left:730px;top:397px;width:64px;text-align:right">1</div>
<div class="cell" style="left:800px;top:397px;width:83px">Sürüde</div>
<div class="cell" style="left:886px;top:397px;width:62px">Doğum</div>
<div class="cell" style="left:951px;top:397px;width:62px">Sürüde</div>
<div class="cell tr" style="left:1016px;top:397px;width:88px">TR39001208677</div>
<div class="a" style="left:0;top:415px;width:12px;height:17px;background:#f0f0f0;box-shadow:inset 1px 1px 0 #fff"></div>
<div class="a" style="left:0;top:432px;width:13px;height:1px;background:#000"></div><div class="a" style="left:12px;top:415px;width:1px;height:18px;background:#000"></div>
<div class="a" style="left:13px;top:415px;width:1091px;height:18px;background:#ffb3ff;border-bottom:1px solid #c0c0c0"></div>
<div class="cell n" style="left:15px;top:415px;width:152px">1000000039</div>
<div class="cell" style="left:170px;top:415px;width:152px">Küpe No Yok</div>
<div class="cell n" style="left:323px;top:415px;width:62px;text-align:right">8</div>
<div class="cell d" style="left:391px;top:415px;width:206px">04.03.2019</div>
<div class="cell n" style="left:600px;top:415px;width:64px">2019-03-04</div>
<div class="cell" style="left:667px;top:415px;width:62px">Dişi</div>
<div class="cell n" style="left:730px;top:415px;width:64px;text-align:right">2</div>
<div class="cell" style="left:800px;top:415px;width:83px">Sürüde</div>
<div class="cell" style="left:886px;top:415px;width:62px">Doğum</div>
<div class="cell" style="left:951px;top:415px;width:62px">Sürüde</div>
<div class="cell tr" style="left:1016px;top:415px;width:88px">TR39001208560</div>
<div class="a" style="left:167px;top:19px;width:1px;height:414px;background:#c0c0c0"></div>
<div class="a" style="left:322px;top:19px;width:1px;height:414px;background:#c0c0c0"></div>
<div class="a" style="left:388px;top:19px;width:1px;height:414px;background:#c0c0c0"></div>
<div class="a" style="left:597px;top:19px;width:1px;height:414px;background:#c0c0c0"></div>
<div class="a" style="left:664px;top:19px;width:1px;height:414px;background:#c0c0c0"></div>
<div class="a" style="left:729px;top:19px;width:1px;height:414px;background:#c0c0c0"></div>
<div class="a" style="left:797px;top:19px;width:1px;height:414px;background:#c0c0c0"></div>
<div class="a" style="left:883px;top:19px;width:1px;height:414px;background:#c0c0c0"></div>
<div class="a" style="left:948px;top:19px;width:1px;height:414px;background:#c0c0c0"></div>
<div class="a" style="left:1013px;top:19px;width:1px;height:414px;background:#c0c0c0"></div>
<div class="a" style="left:1104px;top:19px;width:1px;height:414px;background:#c0c0c0"></div>
</div>
<div class="sb" style="left:1342px;top:241px;width:17px;height:435px;background:linear-gradient(90deg,#e6e6e6 0,#f1f1f1 4px,#f3f3f3 100%)"></div>
<svg class="a" style="left:1347px;top:249px" width="7" height="4" viewBox="0 0 7 4"><path d="M0 4 L3.5 0 L7 4Z" fill="#555"/></svg>
<svg class="a" style="left:1347px;top:665px" width="7" height="4" viewBox="0 0 7 4"><path d="M0 0 L7 0 L3.5 4Z" fill="#555"/></svg>
<div class="thumb" style="left:1343px;top:331px;width:15px;height:165px;background:linear-gradient(90deg,#f4f4f4 0,#e9e9eb 45%,#d0d0d4 55%,#dcdce0 100%)"></div>
<div class="a" style="left:1347px;top:410px;width:7px;height:1px;background:#4f4f4f;box-shadow:0 1px 0 #fff"></div>
<div class="a" style="left:1347px;top:413px;width:7px;height:1px;background:#4f4f4f;box-shadow:0 1px 0 #fff"></div>
<div class="a" style="left:1347px;top:416px;width:7px;height:1px;background:#4f4f4f;box-shadow:0 1px 0 #fff"></div>
<div class="a" style="left:237px;top:674px;width:1122px;height:19px;background:#f0f0f0"></div>
<div class="a" style="left:237px;top:674px;width:1105px;height:2px;background:#fff"></div>
<div class="sb" style="left:237px;top:676px;width:1105px;height:17px;background:linear-gradient(#e6e6e6 0,#f1f1f1 4px,#f3f3f3 100%)"></div>
<svg class="a" style="left:244px;top:680px" width="4" height="7" viewBox="0 0 4 7"><path d="M4 0 L0 3.5 L4 7Z" fill="#555"/></svg>
<svg class="a" style="left:1331px;top:680px" width="4" height="7" viewBox="0 0 4 7"><path d="M0 0 L4 3.5 L0 7Z" fill="#555"/></svg>
<div class="thumb" style="left:256px;top:676px;width:15px;height:15px;background:linear-gradient(#f4f4f4 0,#e9e9eb 45%,#d0d0d4 55%,#dcdce0 100%)"></div>
<div class="a" style="left:0;top:698px;width:230px;height:2px;background:#a0a0a0"></div>
<div class="a" style="left:2px;top:702px;width:198px;height:24px;background:#ffff00;text-align:center;line-height:13px;letter-spacing:-0.12px;padding-top:0;overflow:hidden"><div style="margin-top:-2px">Sürünün Doğum Oranı =1,54<br>Doğumda Ölüm Oranı % 19,15</div></div>
<div class="a" style="left:0;top:700px;width:1366px;height:2px;background:#fff"></div>
<div class="a" style="left:0;top:726px;width:201px;height:2px;background:#a0a0a0"></div>
<div class="a" style="left:201px;top:726px;width:1165px;height:1px;background:#fafafa"></div>
<div class="a" style="left:201px;top:727px;width:1165px;height:1px;background:#a0a0a0"></div>
<div class="a" style="left:200px;top:702px;width:1px;height:24px;background:#a0a0a0"></div>
<div class="a" style="left:201px;top:702px;width:1px;height:24px;background:#fff"></div>
<div class="lbl" style="left:536px;top:708px;font-family:'Liberation Serif',serif;font-weight:bold;font-size:16px;line-height:20px;color:#0b7f20;letter-spacing:0.64px;-webkit-text-stroke:0.45px #0b7f20">Yetkiniz : YÖNETİCİ</div>
<div class="lbl" style="left:531px;top:705px;font-weight:bold;font-size:16px;line-height:20px;color:#ff0000;letter-spacing:0.78px;-webkit-text-stroke:0.3px #ff0000">Yetkiniz : YÖNETİCİ</div>
<div class="btn" style="left:1042px;top:702px;width:162px;height:24px;line-height:22px;letter-spacing:-0.2px">Çıkış Yap / Oturumu Kapat</div>
<div class="a" style="left:1206px;top:702px;width:158px;height:24px;background:#ffff00;text-align:center;line-height:10px;padding-top:3px;letter-spacing:-0.5px">OUTER IP : OFF LINE<br><span style="letter-spacing:-0.05px">LOCAL IP : 127.0.0.1</span></div>
<svg class="a" style="left:1027px;top:714px" width="10" height="10" viewBox="0 0 10 10"><g fill="#b8b8b8"><rect x="7" y="1" width="2" height="2"/><rect x="4" y="4" width="2" height="2"/><rect x="7" y="4" width="2" height="2"/><rect x="1" y="7" width="2" height="2"/><rect x="4" y="7" width="2" height="2"/><rect x="7" y="7" width="2" height="2"/></g></svg>
</body></html>
